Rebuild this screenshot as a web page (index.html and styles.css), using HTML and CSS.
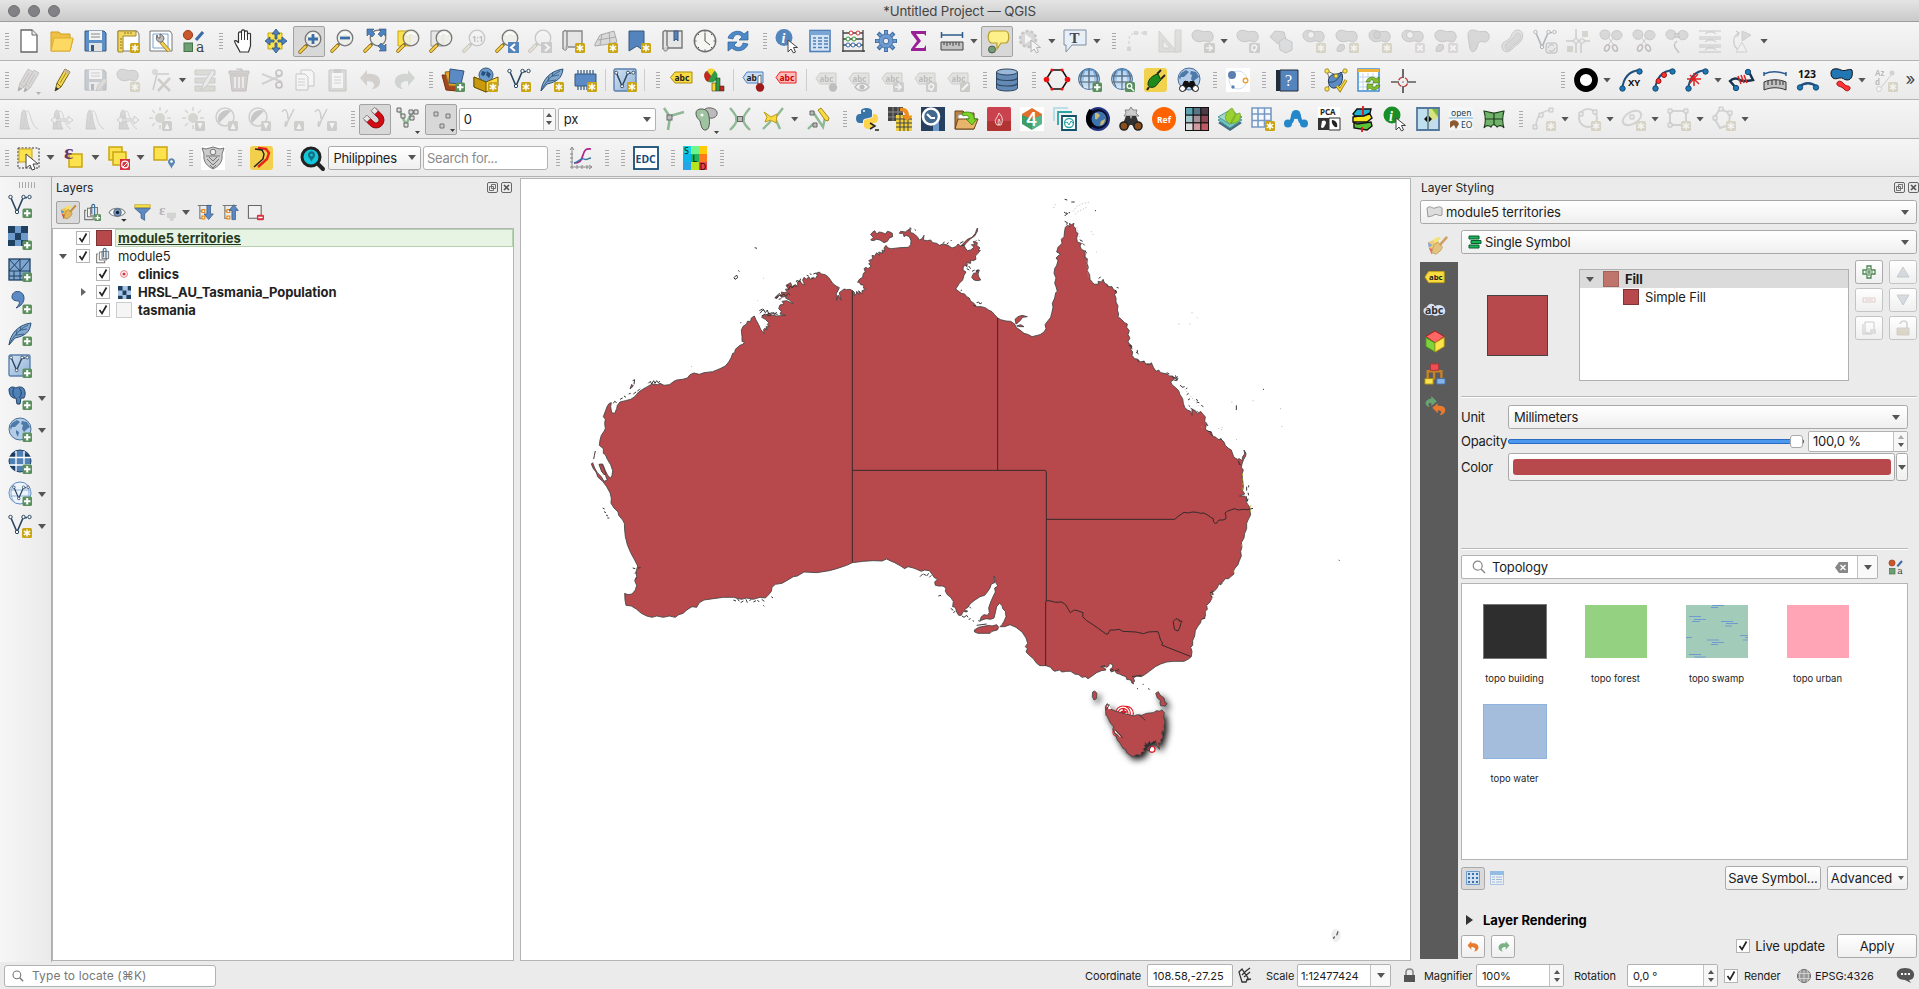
FILE: index.html
```html
<!DOCTYPE html>
<html lang="en">
<head>
<meta charset="utf-8">
<title>*Untitled Project — QGIS</title>
<link rel="stylesheet" href="styles.css">
</head>
<body>
<svg class="defs" width="0" height="0" aria-hidden="true">
<defs>
<linearGradient id="gBlue" x1="0" y1="0" x2="1" y2="1"><stop offset="0" stop-color="#d3e2f3"/><stop offset="1" stop-color="#8fb0d6"/></linearGradient>
<linearGradient id="gSky" x1="0" y1="0" x2="0" y2="1"><stop offset="0" stop-color="#5d9bd8"/><stop offset="1" stop-color="#dfeefa"/></linearGradient>
<!-- badges -->
<g id="bStar"><rect x="14" y="14" width="10" height="10" rx="1.5" fill="#c9a513"/><path d="M19 15.5v7M15.8 17.2l6.4 3.6M22.2 17.2l-6.4 3.6" stroke="#fff" stroke-width="1.5"/></g>
<g id="bPlus"><rect x="14.5" y="14.5" width="9.5" height="9.5" rx="1.5" fill="#5b8f5e"/><path d="M19.2 16v6.6M16 19.3h6.5" stroke="#fff" stroke-width="2"/></g>
<g id="bDel"><rect x="14" y="14" width="10" height="10" rx="1.5" fill="#d9a5a5"/><path d="M16.5 16.5l5 5m0-5l-5 5" stroke="#fff" stroke-width="2"/></g>
<g id="bGo"><rect x="13" y="14" width="11" height="10" rx="1.5" fill="#8e8e86"/><path d="M15 19h6m-3-3l3 3-3 3" stroke="#fff" stroke-width="1.6" fill="none"/></g>
<g id="bRot"><rect x="13" y="14" width="11" height="10" rx="1.5" fill="#8e8e86"/><path d="M16 17c3-2 6 0 4 3l-2 3M16 17v4h3" stroke="#fff" stroke-width="1.5" fill="none"/></g>
<g id="bUp"><rect x="13" y="14" width="10" height="10" rx="1.5" fill="#8d9584"/><path d="M18 16l2.5 6h-5z" fill="#fff"/></g>
<g id="bDn"><rect x="13" y="14" width="10" height="10" rx="1.5" fill="#8d9584"/><path d="M18 22l2.5-6h-5z" fill="#fff"/></g>
<g id="mini"><path d="M19 24h5l-2.500 3z" fill="#444"/></g>
<g id="mag"><path d="M9 15l-1.5 1.5" stroke="#222" stroke-width="2.5"/><path d="M7.5 16.5L2 22" stroke="#8a6a10" stroke-width="3.6" stroke-linecap="round"/><path d="M7.5 16.5L2 22" stroke="#f5cf4a" stroke-width="2" stroke-linecap="round"/><circle cx="15" cy="9" r="7.8" fill="#eeeee9" fill-opacity=".85" stroke="#777" stroke-width="1.3"/><path d="M11 6c2-3 6-3 8 0" stroke="#fff" stroke-width="1.5" fill="none"/></g>
<g id="vee"><path d="M3 4l6 14 6-14 4-.5" fill="none" stroke="#29455f" stroke-width="1.6"/><g fill="#fff" stroke="#29455f"><circle cx="2.5" cy="3" r="1.7"/><circle cx="15.5" cy="3" r="1.7"/><circle cx="21.5" cy="3" r="1.7"/><circle cx="9" cy="18" r="1.7"/></g></g>
<g id="feather"><path d="M1 23C2 13 9 3 23 1c-1 9-6 13-16 15z" fill="#82a8cf" stroke="#2f5379"/><path d="M1 23C6 13 12 7 20 3M8 14l1-6M12 9l1-5M9 13l7-1M13 8l6-1" fill="none" stroke="#2f5379" stroke-width=".8"/></g>
<g id="pencil"><path d="M2 23l2-8L12 1l5 3L8 19z" fill="#f2d84e" stroke="#77631e"/><path d="M12 1l5 3-1.600 2.500-5-3z" fill="#c9b7a0"/><path d="M2 23l1-4 3 2z" fill="#333"/><path d="M4 15l4 4" stroke="#77631e"/><path d="M7 15l6-10" stroke="#a08a20"/></g>
<g id="gpencil"><path d="M2 23l2-8L12 1l5 3L8 19z" fill="#b5a9a0" stroke="#776a66"/><path d="M2 23l1-4 3 2z" fill="#333"/><path d="M4 15l4 4M7 15l6-10" stroke="#776a66"/></g>
<g id="blob"><path d="M1 6c0-4 5-6 9-4 4 2 6-1 10 1 4 3 2 10-2 10-3 0-3-2-6-1-4 2-11 0-11-6z" fill="#a3aaa3" stroke="#6f756f"/></g>
<g id="tag"><path d="M6 5h16v11H6L2 10.500z" fill="#cbc9b8" stroke="#8d8b77"/><text x="5.500" y="14" class="tg">abc</text></g>
<g id="globe"><circle cx="11" cy="11" r="10.500" fill="url(#gSky)" stroke="#4c77a5"/><path d="M1 8h20M1 14h20M11 1v20M5 3c-3 5-3 11 0 16M17 3c3 5 3 11 0 16" fill="none" stroke="#5b6670" stroke-width="1.100"/><path d="M7 3h3v4H6zM12 3h3l1 4h-4zM6 9h4v4H6zM12 9h4v4h-4z" fill="#fff" fill-opacity=".5"/></g>
<g id="world"><circle cx="12" cy="11" r="11" fill="#b3cde8" stroke="#48709a"/><path d="M4 5l5-3 3 2-3 3-2 2-3 0-1 3-1-3zM14 3l5 1 3 5-3 2-3 3-2-3 1-4-2-1zM8 12l3 2-1 5-2-4z" fill="#4d7aa9"/></g>
<g id="hist"><path d="M3 22c1-8 1-19 4-19s2 14 6 19z" fill="#9daa9d" stroke="#888"/><path d="M6 22c2-10 2-20 5-18 3 3 3 15 10 18" fill="none" stroke="#aa8f8f"/></g>
<g id="sun"><circle cx="11" cy="11" r="5" fill="#a9a37c"/><path d="M11 0v4M11 18v4M0 11h4M18 11h4M3 3l3 3M16 6l3-3M3 19l3-3" stroke="#a9a37c" stroke-width="1.600"/></g>
<g id="contrast"><circle cx="10" cy="10" r="9" fill="#eee" stroke="#8b8b8b" stroke-width="1.500"/><path d="M4 16A9 9 0 0 1 16 4z" fill="#777"/></g>
<g id="undo"><path d="M8 2v4c9-1 14 3 13 9-1 4-5 6-8 6 4-3 3-8-5-8v5L1 10z"/></g>
<g id="brush"><path d="M2 8l10-4 4 9-10 8z" fill="#f4c04c"/><path d="M2 8l5 3-4 3z" fill="#5f93d4"/><path d="M3 14l7 2-4 5z" fill="#e1483f"/><path d="M8 4l7-2 1 3-7 4z" fill="#f6e15b"/><path d="M9 10l4-2 5 5-2 4-5 4-5-2z" fill="#e0b75b" stroke="#a97826" stroke-width=".8"/><path d="M15 11l8-9" stroke="#c58932" stroke-width="2.800"/></g>
<g id="i-style"><circle cx="6" cy="6" r="4.600" fill="#c9572c" stroke="#9b3d18"/><path d="M14 11l7-8" stroke="#3a6ea5" stroke-width="3.200"/><rect x="2" y="14" width="8.500" height="8.500" fill="#6d9f72" stroke="#437548"/><text x="14" y="22.500" class="sty">a</text></g>
<g id="sh1"><path d="M3 22C4 11 9 3 21 2" fill="none" stroke="#1f4f7c" stroke-width="2"/><g fill="#2077b4" stroke="#124a74"><circle cx="3.500" cy="20.500" r="2.700"/><circle cx="20.500" cy="3.500" r="2.700"/></g></g>
<g id="layerGrp"><path d="M3 9H1v13h12v-3" fill="none" stroke="#777" stroke-width="1.600"/><path d="M5 6h11v12H5z" fill="#fff" stroke="#777" stroke-width="1.500"/><path d="M9 5h10v11H9z" fill="#e8e8e8" stroke="#777" stroke-width="1.500"/><path d="M11 14V2c1-2 4-2 4 0v14" fill="none" stroke="#3f6f9f" stroke-width="1.600"/></g>
<g id="raster"><path d="M0 0h20v20H0z" fill="#6d9acb"/><path d="M0 0h7v7H0zM13 0h7v7h-7zM7 7h6v7H7zM0 14h7v6H0zM13 14h7v6h-7z" fill="#20405f"/></g>
<g id="tick"><rect x=".5" y=".5" width="13" height="13" fill="#fff" stroke="#b4b4b4"/><path d="M3.500 7l2.500 3.500 4.500-8" fill="none" stroke="#222" stroke-width="1.700"/></g>
<g id="cursor"><path d="M13 11v12l3-3 2.500 4 2-1-2-4.500h4z" fill="#fff" stroke="#444"/></g>
<g id="clover"><path d="M1 5c0-4 5-5 8-3 3 1 2 7-1 8-4 1-7-1-7-5zM14 3c3-3 9-1 9 3s-5 6-8 4-3-4-1-7z" fill="#a3aaa3" stroke="#777"/></g>
<g id="scis"><path d="M9 16l6-8M15 16L9 8" stroke="#888"/><ellipse cx="8" cy="19" rx="2.200" ry="3.300" transform="rotate(25 8 19)" fill="none" stroke="#8a5757" stroke-width="1.500"/><ellipse cx="16" cy="19" rx="2.200" ry="3.300" transform="rotate(-25 16 19)" fill="none" stroke="#8a5757" stroke-width="1.500"/></g>
<!-- project icons -->
<g id="i-new"><path d="M4 1h11l5 5v17H4z" fill="#fff" stroke="#666" stroke-width="1.300"/><path d="M15 1v5h5" fill="#eee" stroke="#666"/></g>
<g id="i-open"><path d="M1 3h8l2 2h9v4l3 1-3 12H1z" fill="#eec045" stroke="#d39f1e"/><path d="M4 9h19l-3 13H1z" fill="#fcd963" stroke="#dfae2e"/></g>
<g id="i-save"><path d="M2 2h19l2 2v18H2z" fill="#5d8fc9" stroke="#36597f"/><path d="M6 2h13v9H6z" fill="#f3f3f3"/><path d="M8 5h9M8 8h9" stroke="#888"/><path d="M6 14h13v8H6z" fill="#e2e2e2"/><path d="M8 16h3v6H8z" fill="#36597f"/></g>
<g id="i-layout"><path d="M2 2h19l2 3v17H2z" fill="#fff" stroke="#777"/><path d="M2 2h18v5H7v16H2z" fill="#f3d660" stroke="#a08a30"/><path d="M4 10h2M4 13h2M4 16h2M4 19h2M9 3v2M12 3v2M15 3v2" stroke="#8d7420"/><use href="#bStar"/></g>
<g id="i-mgr"><path d="M1 2h20l2 3v17H1z" fill="#fff" stroke="#777"/><path d="M4 5h15v14H4z" fill="none" stroke="#79a1ce"/><path d="M12 13l8 9" stroke="#9e8120" stroke-width="4"/><path d="M12 13l8 9" stroke="#f1d253" stroke-width="2.500"/><path d="M8 6c-2 5 1 8 5 7l2-3c0-3-2-4-4-5v4H9z" fill="#bbb" stroke="#666"/></g>
<g id="i-hand"><path d="M9 23C7 18 4 15 3.500 12c1-1 3 0 4 2V4c1-2 3-1 3 0V2c1-2 3-1 3 0v1c1-2 3-1 3 0v2c1-1 3-1 3 0v12l-2 6z" fill="#fff" stroke="#333" stroke-width="1.200"/><path d="M10.500 4v7M13.500 3v8M16.500 5v6" stroke="#333"/></g>
<g id="i-pan"><path d="M4 4h14v16H4z" fill="#fce24d" stroke="#c9a513"/><path d="M12 0l4 5h-3v5h-2V5H8zM12 24l4-5h-3v-5h-2v5H8zM1 12l5-4v3h4v2H6v3zM23 12l-5-4v3h-4v2h4v3z" fill="#4d82bf" stroke="#2c527c" stroke-width=".8"/></g>
<g id="i-zin"><use href="#mag"/><path d="M15 4v10M10 9h10" stroke="#3c6ea8" stroke-width="2.800"/></g>
<g id="i-zout"><use href="#mag"/><path d="M10 9h10" stroke="#3c6ea8" stroke-width="2.800"/></g>
<g id="i-zfull"><use href="#mag"/><g fill="#4d82bf" stroke="#2c527c" stroke-width=".6"><path d="M4 0h7L9 2l3 3-3 3-3-3-2 2zM23 0v7l-2-2-3 3-3-3 3-3-2-2zM23 22h-7l2-2-3-3 3-3 3 3 2-2z"/></g></g>
<g id="i-zsel"><path d="M2 2h12v15H2z" fill="#fce24d" stroke="#c9a513"/><use href="#mag"/></g>
<g id="i-zlay"><path d="M2 2h12v15H2z" fill="#e6e6e6" stroke="#999"/><use href="#mag"/></g>
<g id="i-znat"><use href="#mag"/><text x="10" y="12.500" class="tg">1:1</text></g>
<g id="i-zlast"><use href="#mag"/><path d="M13 13h11v11H13z" fill="#5484bd"/><path d="M20 15l-4 3.500 4 3.500" fill="none" stroke="#fff" stroke-width="2"/></g>
<g id="i-znext"><use href="#mag"/><path d="M13 13h11v11H13z" fill="#888"/><path d="M17 15l4 3.500-4 3.500" fill="none" stroke="#fff" stroke-width="2"/></g>
<g id="i-nmap"><path d="M2 20V3c2-2 3-2 4 0v14M6 2h15v16H7" fill="#e5e5e5" stroke="#888" stroke-width="1.400"/><path d="M2 19c0 3 4 3 4 0v-3" fill="#ccc" stroke="#888"/><use href="#bStar"/></g>
<g id="i-n3d"><path d="M1 15l5-9 14-4 3 11-8 2-14 2z" fill="#d9d9d9" stroke="#aaa"/><path d="M4 11l18-3M8 5l-2 11M15 3l1 11" stroke="#aaa"/><use href="#bStar"/></g>
<g id="i-nbm"><path d="M2 2h15v20l-7-5-8 5z" fill="#5484bd" stroke="#36597f"/><use href="#bStar"/></g>
<g id="i-bm"><path d="M3 20V3c2-2 3-2 4 0v14M7 2h15v17H7" fill="#e5e5e5" stroke="#777" stroke-width="1.400"/><path d="M14 2h4v10l-2-2-2 2z" fill="#5484bd" stroke="#36597f"/><path d="M3 19c0 4 5 4 5 0v-2" fill="#ccc" stroke="#777"/></g>
<g id="i-clock"><circle cx="12" cy="12" r="10.700" fill="#f6f6f3" stroke="#707070" stroke-width="1.400"/><path d="M12 4v8l5 4M12 2v1.500M12 20.500V22M2 12h1.500M20.500 12H22M5 5l1 1M18 18l1 1M5 19l1-1M18 6l1-1" fill="none" stroke="#555"/></g>
<g id="i-refresh"><path d="M2 9C4 2 14 0 18 5l4-3v9h-9l3-3c-3-4-8-3-9 2z" fill="#4d8ac9" stroke="#2a5c92" stroke-width=".7"/><path d="M22 15c-2 7-12 9-16 4l-4 3v-9h9l-3 3c3 4 8 3 9-2z" fill="#4d8ac9" stroke="#2a5c92" stroke-width=".7"/></g>
<g id="i-ident"><circle cx="9" cy="8.500" r="8.500" fill="#5585bd"/><text x="6.500" y="14" class="ital">i</text><use href="#cursor"/></g>
<g id="i-table"><rect x="2" y="1.500" width="20" height="21" fill="#d5e4f5" stroke="#4f80b6" stroke-width="1.600"/><path d="M2 2h20v4H2z" fill="#7ba5d4"/><path d="M5 9h3M10 9h4M16 9h4M5 12h3M10 12h4M16 12h4M5 15h3M10 15h4M16 15h4M5 18.500h3M10 18.500h4M16 18.500h4" stroke="#4f80b6" stroke-width="1.600"/></g>
<g id="i-abacus"><path d="M2 1v22M22 1v22M1 22h23M2 4h20M2 10h20M2 16h20" stroke="#444" stroke-width="1.300"/><g fill="#fff" stroke="#c33"><circle cx="10" cy="4" r="2"/><circle cx="17" cy="4" r="2"/></g><g fill="#fff" stroke="#393"><circle cx="7" cy="10" r="2"/><circle cx="13" cy="10" r="2"/></g><g fill="#fff" stroke="#36a"><circle cx="7" cy="16" r="2"/><circle cx="12" cy="16" r="2"/><circle cx="18" cy="16" r="2"/></g></g>
<g id="i-gear"><path d="M12 1v22M1 12h22M4 4l16 16M20 4L4 20" stroke="#3f6fa5" stroke-width="4"/><path d="M12 2v20M2 12h20M5 5l14 14M19 5L5 19" stroke="#6f9bd0" stroke-width="2.400"/><circle cx="12" cy="12" r="7" fill="#6f9bd0" stroke="#4878ad"/><circle cx="12" cy="12" r="2.800" fill="#eee" stroke="#3f6fa5"/></g>
<g id="i-sigma"><path d="M4 2h15v5l-2-2H9l5 7-6 7h9l2-3v6H4v-2l6-8-6-8z" fill="#9a2096"/></g>
<g id="i-ruler"><path d="M1 6h22M1.500 3v6M22.500 3v6" stroke="#2d5b8e" stroke-width="1.500"/><path d="M1 13h22v8H1z" fill="#c2c2c2" stroke="#444"/><path d="M4 13v3M7 13v4M10 13v3M13 13v4M16 13v3M19 13v4" stroke="#444"/></g>
<g id="i-tips"><path d="M6 1h13c5 0 5 12 0 12h-4l-4 6v-6H6C1 13 1 1 6 1z" fill="#fdf08a" stroke="#b9a02c" stroke-width="1.200"/><circle cx="6" cy="19.500" r="3.500" fill="#6d9f72" stroke="#555"/></g>
<g id="i-action"><circle cx="10" cy="10" r="8" fill="#aaa" stroke="#777" stroke-width="2.500" stroke-dasharray="3 2"/><path d="M7 5l7 5-7 5z" fill="#fff"/><use href="#cursor"/></g>
<g id="i-text"><path d="M1 1h22v15H9l-6 7v-7H1z" fill="#e9eff6" stroke="#7d8da0"/><text x="6.500" y="13.500" class="serifT">T</text></g>
<!-- advanced digitizing -->
<g id="i-cad"><path d="M4 20V11c0-5 3-7 8-7h8" fill="none" stroke="#888" stroke-dasharray="3 2"/><path d="M2 18h4v4H2zM9 2h4v4H9zM18 2h4v4h-4z" fill="#aaa"/></g>
<g id="i-tri"><path d="M1 23V2l18 21zM5 19v-8l7 8z" fill="#c4bcae" stroke="#998" fill-rule="evenodd"/><path d="M17 1h6v22h-6z" fill="#c4bcae" stroke="#998"/></g>
<g id="i-mv"><use href="#blob"/><use href="#bGo"/></g>
<g id="i-rot"><use href="#blob"/><use href="#bRot"/></g>
<g id="i-simp"><path d="M1 8l5-6 9 1 2 8-8 4z" fill="#a3aaa3" stroke="#777"/><path d="M10 13l5-4 8 4v8l-6 3-6-3z" fill="#b5bcc4" stroke="#777"/></g>
<g id="i-ring"><use href="#blob"/><circle cx="9" cy="6" r="3.500" fill="#eee" stroke="#777"/><use href="#bStar"/></g>
<g id="i-part"><use href="#blob"/><path d="M2 22c0-5 3-8 7-6 2 4-2 8-7 6z" fill="#a3aaa3" stroke="#777"/><use href="#bStar"/></g>
<g id="i-fring"><use href="#blob"/><circle cx="9" cy="6" r="3.500" fill="#999" stroke="#777"/><use href="#bStar"/></g>
<g id="i-dring"><use href="#blob"/><circle cx="9" cy="6" r="3.500" fill="#eee" stroke="#777"/><use href="#bDel"/></g>
<g id="i-dpart"><use href="#blob"/><path d="M2 22c0-5 3-8 7-6 2 4-2 8-7 6z" fill="#a3aaa3" stroke="#777"/><use href="#bDel"/></g>
<g id="i-reshape"><path d="M1 5c0-4 5-5 9-3s6-1 10 1c4 3 2 10-2 10-3 0-5-2-7 2-2 9-7 10-8 4s-2-9-2-14z" fill="#a3aaa3" stroke="#777"/></g>
<g id="i-offset"><path d="M2 18c-1-5 4-5 7-8s3-9 9-9c7 1 5 9 2 12s-4 3-8 7-9 4-10-2z" fill="#c9c5b0" stroke="#777"/><path d="M5 17c1-4 4-4 7-7s3-6 6-6c4 1 3 6 0 9s-4 2-7 6-6 2-6-2z" fill="#a3aaa3" stroke="#888"/></g>
<g id="i-revl"><use href="#vee"/><rect x="13" y="14" width="11" height="10" rx="2" fill="#ddd" stroke="#555"/><path d="M15 19c1-4 5-4 6-2M22 19c-1 4-5 4-6 2" fill="none" stroke="#555"/></g>
<g id="i-trim"><path d="M0 12h24M10 0v24M15 12v12" stroke="#888" stroke-width="1.500"/><path d="M8 10h4v4H8zM14 10h4v4h-4z" fill="#eee" stroke="#888"/><path d="M16 2h6v6h-6zM1 17h6v6H1z" fill="#aaa06f"/></g>
<g id="i-splitf"><use href="#clover"/><use href="#scis"/></g>
<g id="i-merge"><use href="#clover"/><path d="M9 5h6M9 8h6M12 12c-6 5 0 8 2 12" fill="none" stroke="#777" stroke-width="1.500"/></g>
<g id="i-mergea"><path d="M1 2h22M1 8h22M1 10h22M1 16h22M1 18h22M1 23h22M7 5l3-2h5l3 2M7 13l3-2h5l3 2M7 21l3-2h5l3 2" fill="none" stroke="#777"/></g>
<g id="i-rotsym"><path d="M8 21C1 17 1 7 8 4L5 2M8 4l-2 4" fill="none" stroke="#888" stroke-width="1.300"/><path d="M11 2l9 4-9 6z" fill="#aaa" stroke="#888"/><path d="M5 23h11l-5-10z" fill="#f3f3f3" stroke="#999"/></g>
<!-- editing -->
<g id="i-pens"><g transform="translate(-1)"><use href="#gpencil"/></g><g transform="translate(5 1)"><use href="#gpencil"/></g><use href="#mini"/></g>
<g id="i-pencil"><g transform="translate(3)"><use href="#pencil"/></g></g>
<g id="i-sedit"><use href="#i-save"/><path d="M13 23l2-6 6-7 3 3-6 8z" fill="#c4b48f" stroke="#887"/></g>
<g id="i-addpoly"><use href="#blob"/><use href="#bStar"/></g>
<g id="i-vtool"><path d="M4 22L8 6M8 6h12M8 6L4 2" stroke="#888" stroke-width="1.500"/><circle cx="6" cy="4" r="3" fill="#aaa"/><path d="M9 11l12 12M21 10L9 23" stroke="#998e77" stroke-width="2.600"/></g>
<g id="i-attr"><path d="M1 2h20v5H1zM1 10h20v5H1zM1 18h20v5H1z" fill="#b9b586" stroke="#888"/><path d="M7 22l3-8L18 2l3 2-8 14z" fill="#ddd" stroke="#888"/></g>
<g id="i-trash"><path d="M3 7h18l-2 16H5zM2 3h20v3H2zM9 1h6v2" fill="#bd8c8c" stroke="#8e6262"/><path d="M8 9v11M12 9v11M16 9v11" stroke="#fff" stroke-width="1.500"/></g>
<g id="i-cut"><path d="M2 6l20 8M2 16L22 7" stroke="#999" stroke-width="2"/><circle cx="19" cy="5" r="3" fill="none" stroke="#8e6262" stroke-width="1.700"/><circle cx="19" cy="17" r="3" fill="none" stroke="#8e6262" stroke-width="1.700"/></g>
<g id="i-copy"><path d="M8 2h10l3 3v13H8z" fill="#fff" stroke="#777"/><path d="M3 6h9l3 3v13H3z" fill="#fff" stroke="#777"/><path d="M5 11h7M5 14h7M5 17h7" stroke="#999"/></g>
<g id="i-paste"><path d="M3 2h17v21H3z" fill="#b8b295" stroke="#777"/><path d="M6 5h11v15H6z" fill="#fff"/><path d="M8 1h7v4H8z" fill="#888"/><path d="M8 9h7M8 12h7M8 15h7" stroke="#999"/></g>
<g id="i-undo"><use href="#undo" fill="#b58e75"/></g>
<g id="i-redo"><use href="#undo" fill="#87a787" transform="matrix(-1 0 0 1 24 0)"/></g>
<!-- data sources -->
<g id="i-dsm"><path d="M1 7l12 0 3 16-11-1z" fill="#a3461f" stroke="#74300f"/><path d="M4 4l12-1 4 15H8z" fill="#e9a22a" stroke="#8f6417"/><path d="M9 1l14 2-3 13-12-1z" fill="#5b8ac4" stroke="#31557f"/><use href="#bPlus"/></g>
<g id="i-gpkg"><circle cx="12" cy="7" r="7" fill="#6d9acb" stroke="#36597f"/><path d="M8 3l4 1-2 4-3-1zM13 3l4 3-2 4-3-3z" fill="#254f7c"/><path d="M0 9l12 5 12-5v9l-12 6L0 19z" fill="#fbdc45" stroke="#6d5605"/><path d="M0 9l12 5v10L0 19z" fill="#c99a0c" stroke="#6d5605"/><use href="#bStar"/></g>
<g id="i-vnew"><use href="#vee"/><use href="#bStar"/></g>
<g id="i-fnew"><use href="#feather"/><use href="#bStar"/></g>
<g id="i-mem"><path d="M5 2v20M8 2v20M11 2v20M14 2v20M17 2v20M20 2v20" stroke="#36597f" stroke-width="1.200"/><path d="M2 6h21v12H2z" fill="#5b8ac4" stroke="#36597f"/><use href="#bStar"/></g>
<g id="i-virt"><rect x="1" y="1" width="22" height="22" rx="1.500" fill="url(#gBlue)" stroke="#5a80ab" stroke-width="1.400"/><g transform="translate(1 2) scale(.9)"><use href="#vee"/></g><use href="#bStar"/></g>
<!-- labels -->
<g id="i-lab"><path d="M6 4h17v11H6L1.500 9.500z" fill="#f8dc3f" stroke="#a98b12"/><text x="5.500" y="13" class="tgb">abc</text></g>
<g id="i-diag"><circle cx="9" cy="8" r="6.500" fill="#2f9d45"/><path d="M9 8L5 2a7 7 0 0 1 8 0z" fill="#f9d22d"/><path d="M9 8L4 3a7 7 0 0 0 2 11z" fill="#c8261d"/><path d="M10 15h4v8h-4z" fill="#f9d22d" stroke="#222" stroke-width=".5"/><path d="M14 10h4v13h-4z" fill="#2f9d45" stroke="#222" stroke-width=".5"/><path d="M18 18h4v5h-4z" fill="#c8261d" stroke="#222" stroke-width=".5"/></g>
<g id="i-lpin"><path d="M6 4h16v11H6L2 9.500z" fill="#c9dcf4" stroke="#4f80c0"/><text x="5.500" y="13" class="tgb">ab</text><path d="M17 8l3-1v9h-3z" fill="#fff" stroke="#333" stroke-width=".7"/><circle cx="19" cy="19.500" r="4.200" fill="#9d1b1b"/></g>
<g id="i-lunp"><path d="M6 4h16v11H6L2 9.500z" fill="#fbb" stroke="#e22"/><text x="5.500" y="13" class="tgr">abc</text></g>
<g id="i-l1"><use href="#tag"/><circle cx="19" cy="19.500" r="4.200" fill="#7d5b5b"/></g>
<g id="i-l2"><use href="#tag"/><path d="M8 19c4-5 10-5 14 0-4 5-10 5-14 0z" fill="#fff" stroke="#666" stroke-width="1.400"/><circle cx="15" cy="19" r="2.600" fill="#666"/></g>
<g id="i-l3"><use href="#tag"/><use href="#bGo"/></g>
<g id="i-l4"><use href="#tag"/><use href="#bRot"/></g>
<g id="i-l5"><use href="#tag"/><rect x="14" y="14" width="10" height="10" rx="1.500" fill="#8e8a66"/><path d="M16 22l6-6" stroke="#fff" stroke-width="2.200"/></g>
<g id="i-db"><path d="M1.500 4v16c0 4 21 4 21 0V4" fill="#6389b5" stroke="#30475f"/><ellipse cx="12" cy="4" rx="10.500" ry="3" fill="#9bb8d9" stroke="#30475f"/><path d="M1.500 9.500c0 4 21 4 21 0M1.500 15c0 4 21 4 21 0" fill="none" stroke="#30475f" stroke-width="1.200"/></g>
<!-- web plugins -->
<g id="i-hex"><path d="M7 2h10l6 9.500L17 21H7L1 11.500z" fill="none" stroke="#111" stroke-width="1.500"/><g fill="#ee1111"><circle cx="7" cy="2" r="1.600"/><circle cx="17" cy="2" r="1.600"/><circle cx="7" cy="21" r="1.600"/><circle cx="17" cy="21" r="1.600"/><circle cx="1.500" cy="11.500" r="2.800"/><circle cx="22.500" cy="11.500" r="2.800"/></g></g>
<g id="i-wadd"><use href="#globe"/><use href="#bPlus"/></g>
<g id="i-wsea"><use href="#globe"/><rect x="14" y="14" width="10" height="10" rx="1.500" fill="#5b8f5e"/><circle cx="18.500" cy="18" r="2.300" fill="none" stroke="#fff" stroke-width="1.300"/><path d="M20 20l3 3" stroke="#fff" stroke-width="1.500"/></g>
<g id="i-plug"><rect width="23" height="24" rx="3" fill="#f1d24f"/><path d="M4 16c0-5 5-9 10-10l3 6c-3 2-4 6-7 7s-6 0-6-3z" fill="#1f8a1c" stroke="#0e3c0c"/><path d="M13 6l4-4M17 11l4-4" stroke="#222" stroke-width="1.800"/><path d="M5 19l-2 3" stroke="#222" stroke-width="2"/></g>
<g id="i-wbin"><use href="#world"/><path d="M3 22l4-9h4l1 2 1-2h4l4 9-5 1-3-4h-2l-3 4z" fill="#111"/><g fill="#fff" stroke="#111"><circle cx="5.500" cy="20.500" r="3"/><circle cx="18.500" cy="20.500" r="3"/></g></g>
<g id="i-orbit"><path d="M0 0h24v24H0z" fill="#fff"/><circle cx="12" cy="12" r="9" fill="none" stroke="#cfe0ee"/><circle cx="6" cy="7" r="4" fill="#5c7fb0"/><circle cx="19.500" cy="12.500" r="2.300" fill="#fff" stroke="#eea032" stroke-width="1.400"/><circle cx="7" cy="19" r="1.700" fill="#5c7fb0"/></g>
<g id="i-help"><path d="M1 2h4v21H1z" fill="#222d3a"/><path d="M5 2h18v21H5z" fill="#5484bd" stroke="#222d3a"/><text x="10" y="18" class="qm">?</text></g>
<g id="i-topo"><path d="M3 3l9 4 9-4M3 3l2 7M3 21l3-5" stroke="#777" fill="none"/><path d="M5 10c3-6 9-2 12-6 3 4 2 14-6 16-5 1-8-5-6-10z" fill="#5b8ac4" stroke="#223a57"/><path d="M5 14c5 1 9-2 12-8" fill="none" stroke="#223a57" stroke-width=".8"/><g fill="#fbe34c" stroke="#7b6b10" stroke-width=".7"><circle cx="3" cy="3" r="2.200"/><circle cx="21" cy="3" r="2.200"/><circle cx="3" cy="21" r="2.200"/><circle cx="12" cy="8" r="2"/></g><path d="M13 18l3 4 6-10" fill="none" stroke="#8a7410" stroke-width="3"/><path d="M13 18l3 4 6-10" fill="none" stroke="#f9d22d" stroke-width="1.600"/></g>
<g id="i-reload"><path d="M1 1h21v22H1z" fill="#fff" stroke="#3d8fd1" stroke-width="1.500"/><path d="M1 1h21v3H1z" fill="#f0b33c"/><path d="M6 5v17M11 5v17M16 5v17M2 9h19M2 14h19M2 19h19" stroke="#bcd7ee"/><path d="M9 14c2-6 8-6 10-3l3-2v6h-6l1-2c-2-2-4-1-4 1z" fill="#82bf2f" stroke="#3e6d10" stroke-width=".6"/><path d="M23 17c-2 6-8 6-10 3l-3 2v-6h6l-1 2c2 2 4 1 4-1z" fill="#82bf2f" stroke="#3e6d10" stroke-width=".6"/></g>
<g id="i-cross"><path d="M13 1v9M13 18v7M1 14h8M17 14h9M12.500 14h1" stroke="#111" stroke-width="1.200"/><circle cx="13" cy="14" r="4.700" fill="none" stroke="#b33" stroke-width="1.300" stroke-dasharray="4.500 2.880" stroke-dashoffset="-1.500"/></g>
<g id="i-ringk"><circle cx="12" cy="12" r="9" fill="#fff" stroke="#000" stroke-width="5.800"/></g>
<g id="i-xy"><use href="#sh1"/><text x="9" y="18" class="xy">XY</text></g>
<g id="i-pts"><use href="#sh1"/><g fill="#f33" stroke="#911"><circle cx="6.500" cy="13" r="2.500"/><circle cx="12" cy="7" r="2.500"/></g></g>
<g id="i-xcut"><use href="#sh1"/><path d="M9 5v13M2 11h14M5 7l9 9M13 6l-8 9" stroke="#d22" stroke-width="1.500"/></g>
<g id="i-brk"><path d="M6 20l-6-7c3-3 7-3 10-1s8 1 13 0l-4-8" fill="none" stroke="#16324d" stroke-width="2.400"/><path d="M8 8l3 8M11 7l3 8M14 7l3 8" stroke="#d22" stroke-width="1.500"/><g fill="#2077b4" stroke="#124a74"><circle cx="6" cy="20" r="2.700"/><circle cx="18" cy="4" r="2.700"/></g></g>
<g id="i-rul2"><path d="M1 6c7-3 14-3 22 0M1 4v4M23 4v4" fill="none" stroke="#2d5b8e" stroke-width="1.500"/><path d="M1 14c7-3 15-3 22 0v8c-7-3-15-3-22 0z" fill="#c2c2c2" stroke="#333"/><path d="M5 13v4M9 12v5M13 12v5M17 13v4M20 13v4" stroke="#333"/></g>
<g id="i-123"><text x="2" y="10" class="n123">123</text><path d="M3 19c6-5 12-5 18 0" fill="none" stroke="#1f4f7c" stroke-width="2.400"/><g fill="#2077b4" stroke="#124a74"><circle cx="4" cy="19.500" r="2.700"/><circle cx="20" cy="19.500" r="2.700"/></g></g>
<g id="i-bred"><path d="M2 5c0-5 6-5 10-3s8-2 11 0c1 5 0 10-5 10-3 0-4-3-8-2-5 2-8 0-8-5z" fill="#2077b4" stroke="#111"/><path d="M8 15c1-3 5-2 7 1s6 1 6 4-4 4-6 1-8-2-7-6z" fill="#f33" stroke="#911"/></g>
<g id="i-azd"><text x="1" y="8" class="tg">Az</text><text x="1" y="17" class="tg">d</text><path d="M5 22L18 6" stroke="#888"/><circle cx="18" cy="5" r="2.500" fill="#999"/><circle cx="5" cy="21" r="2.500" fill="#fff" stroke="#999"/><use href="#bStar"/></g>
<!-- raster and snapping -->
<g id="i-h1"><use href="#hist"/></g>
<g id="i-h2"><use href="#hist"/><path d="M1 13l5-4v3h12V9l5 4-5 4v-3H6v3z" fill="#eee" stroke="#888"/></g>
<g id="i-s1"><use href="#sun"/><use href="#bUp"/></g><g id="i-s2"><use href="#sun"/><use href="#bDn"/></g>
<g id="i-c1"><use href="#contrast"/><use href="#bUp"/></g><g id="i-c2"><use href="#contrast"/><use href="#bDn"/></g>
<g id="gam"><path d="M1 5c3-5 6-1 6 7M13 2L7 14c-2 7-4 7-2 0" fill="none" stroke="#888" stroke-width="1.500"/></g>
<g id="i-g1"><use href="#gam"/><use href="#bUp"/></g><g id="i-g2"><use href="#gam"/><use href="#bDn"/></g>
<g id="i-magnet"><g transform="rotate(-45 12 12)"><path d="M4 4v8a8 8 0 0 0 16 0V4h-5v8a3 3 0 0 1-6 0V4z" fill="#d40b12" stroke="#7d0508" stroke-width=".8"/><path d="M4 2h5v5H4zM15 2h5v5h-5z" fill="#e8e8e8" stroke="#777" stroke-width=".8"/></g></g>
<g id="i-snapv"><path d="M4 4l6 14L15 7l7-3" fill="none" stroke="#8fb894" stroke-width="2.600"/><g fill="#ddd" stroke="#666"><path d="M1 1h4v4H1zM13 3h4v4h-4zM18 3h4v4h-4zM8 16h4v4H8zM5 7h4v4H5zM14 9h4v4h-4z"/></g><use href="#mini"/></g>
<g id="i-snapp"><g fill="#ccc" stroke="#777"><path d="M4 4h4v4H4zM16 6h4v4h-4zM10 16h4v4h-4z"/></g><path d="M20 21h5l-2.500 3z" fill="#444"/></g>
<g id="i-t1"><path d="M2 1l6 9-2 13M8 9l14-4" fill="none" stroke="#8fb894" stroke-width="2.600"/><rect x="5" y="8" width="5" height="5" fill="#bbb" stroke="#666"/></g>
<g id="i-t2"><path d="M9 3c3-4 12-2 13 2s-3 7-8 6z" fill="#bbb" stroke="#666"/><path d="M1 6c0-5 8-5 11-2 3 4 4 18-1 19s-5-7-6-9-4-3-4-8z" fill="#9dc3a1" stroke="#555"/><circle cx="7" cy="8" r="1.500" fill="#fff"/><use href="#mini"/></g>
<g id="i-t3"><path d="M2 1c9 10 9 13 0 22M22 1c-9 10-9 13 0 22M7 12h10" fill="none" stroke="#8fb894" stroke-width="2.400"/><rect x="9.500" y="9.500" width="5" height="5" fill="#bbb" stroke="#666"/></g>
<g id="i-t4"><path d="M22 1l-8 10M2 22l8-8M14 11l5 11" fill="none" stroke="#8fb894" stroke-width="2.400"/><path d="M3 5l7 5 6-3-1 9-5-3-6 2 2-5z" fill="#f8dc3f" stroke="#c09a15"/></g>
<g id="i-t5"><path d="M2 22l5-5M7 5l10 15 2-9" fill="none" stroke="#8fb894" stroke-width="2.400"/><g fill="#bbb" stroke="#666"><path d="M4 4h4v4H4zM7 16h4v4H7z"/></g><path d="M12 3l3-2 8 10-1 3-3-1z" fill="#f8dc3f" stroke="#a08a20"/></g>
<!-- plugins row -->
<g id="i-py"><path d="M6 7V4c0-4 11-4 11 0v5c0 3-9 1-9 5v2H4c-4 0-4-9 0-9h8" fill="#3775a9"/><path d="M9 16v-2c0-3 9-1 9-5V7h2c4 0 4 9 0 9h-7M9 16v3c0 4 9 4 9 0v-3z" fill="#fcd34a"/><circle cx="9" cy="4" r="1" fill="#fff"/><path d="M15 16l5 3-5 3M20 23h4" fill="none" stroke="#222" stroke-width="1.500"/></g>
<g id="i-rast"><path d="M0 0h15v14H0z" fill="#444"/><path d="M0 5h15M0 10h15M5 0v14M10 0v14" stroke="#8c8c8c"/><path d="M8 8h16v16H8z" fill="#ecd03f"/><path d="M8 12h16M8 16h16M8 20h16M12 8v16M16 8v16M20 8v16" stroke="#444"/><path d="M12 1c7-1 9 3 9 8h3l-5 5-5-5h3c0-4-2-5-5-5z" fill="#ef8c1d"/></g>
<g id="i-clk2"><path d="M0 0h24v24H0z" fill="#274060"/><path d="M12 12h6v12h-6z" fill="#6d9acb"/><circle cx="10" cy="9.500" r="8" fill="#41688f" stroke="#fff" stroke-width="2.600"/><path d="M6 7l4 4h4" fill="none" stroke="#fff" stroke-width="2.200"/></g>
<g id="i-fold"><path d="M1 4h8l2 2h9v16H1z" fill="#b98043" stroke="#6d451a"/><path d="M4 8l14-2v12H4z" fill="#fff" stroke="#999"/><path d="M4 12h20l-4 10H1z" fill="#e8b36a" stroke="#6d451a"/><path d="M8 6c8-3 13 1 12 6h3l-5 6-6-6h3c0-4-3-4-6-3z" fill="#7bd425" stroke="#2f7a0a" stroke-width=".7"/></g>
<g id="i-fire"><rect width="24" height="24" rx="1.500" fill="#c9424d"/><path d="M0 14h24v10H0z" fill="#a42b22" fill-opacity=".6"/><path d="M12 6c4 4 4 8 2 12h-4c-4-5 0-6 2-12zM12 12c1.500 3 1.500 4 0 6-1.500-2-1-4 0-6z" fill="none" stroke="#f6dada" stroke-width="1"/></g>
<g id="i-four"><path d="M0 0h24v24H0z" fill="#fff"/><path d="M12 1l10 6v5H2V7z" fill="#e2702c"/><path d="M2 8l10 4v11L2 17z" fill="#3f9c63"/><path d="M22 8v9l-10 6V12z" fill="#57b58b"/><text x="6.500" y="18.500" class="four">4</text></g>
<g id="i-frames"><path d="M1 14V1h14" fill="none" stroke="#a9dbe5" stroke-width="1.600"/><path d="M5 18V5h14" fill="none" stroke="#2aa6a6" stroke-width="1.800"/><path d="M9 9h14v14H9z" fill="#fff" stroke="#14526b" stroke-width="1.800"/><circle cx="16" cy="16" r="4.500" fill="none" stroke="#2aa6a6" stroke-width="1.300"/><path d="M12 16l2-1 2 3 2-4 2 2" fill="none" stroke="#2aa6a6"/></g>
<g id="i-earth"><circle cx="12" cy="12" r="11" fill="#0a0d2a" stroke="#223682" stroke-width="2"/><circle cx="13" cy="12" r="7.500" fill="#3d73ad"/><path d="M9 6c4 0 6 2 4 4s-2 3-4 2zM15 14l4-2c0 4-3 7-5 6z" fill="#c8b97a"/><path d="M5 3c-4 6-4 12 1 17" stroke="#000" stroke-width="4" fill="none"/></g>
<g id="i-binoc"><path d="M12 0l2 3h4l-1 3 3 3H5l2-3-1-3h4z" fill="#c9ccca" stroke="#888"/><path d="M3 19l4-10h4l1 3 1-3h4l4 10-4 4-4-5h-2l-4 5z" fill="#333"/><g fill="#8a4d1c" stroke="#222" stroke-width="1.600"><circle cx="5" cy="19" r="4"/><circle cx="19" cy="19" r="4"/></g></g>
<g id="i-ref"><circle cx="12" cy="12" r="12" fill="#fe6300"/><text x="5" y="16" class="ref">Ref</text></g>
<g id="i-biv"><path d="M0 0h24v24H0z" fill="#111"/><path d="M1 1h6.500v6.500H1z" fill="#5ba3b0"/><path d="M8.700 1h6.500v6.500H8.700z" fill="#587587"/><path d="M16.400 1H23v6.500h-6.600z" fill="#4b3b46"/><path d="M1 8.700h6.500v6.500H1z" fill="#a1c6cd"/><path d="M8.700 8.700h6.500v6.500H8.700z" fill="#a39098"/><path d="M16.400 8.700H23v6.500h-6.600z" fill="#8c4752"/><path d="M1 16.400h6.500V23H1z" fill="#dcdcdc"/><path d="M8.700 16.400h6.500V23H8.700z" fill="#cf9ba0"/><path d="M16.400 16.400H23V23h-6.600z" fill="#c15a60"/></g>
<g id="i-leaf"><path d="M0 16l12-7 12 7-12 8z" fill="#476b7c"/><path d="M0 13l12-7 12 7-12 8z" fill="#75c2bf" stroke="#4a98a0"/><path d="M0 10L12 3l12 7-12 7z" fill="#a4d8c9" stroke="#4a98a0"/><path d="M12 17C3 11 9 4 14 1c4 5 5 10-2 16zM13 16c2-7 5-9 9-10 2 7-3 11-9 10z" fill="#9ad02f" stroke="#6ca11c" stroke-width=".7"/></g>
<g id="i-grid"><path d="M1 1h19v19H1zM7 1v19M13.500 1v19M1 7h19M1 13.500h19" fill="#f5f9fd" stroke="#7799c4" stroke-width="1.600"/><use href="#bStar"/></g>
<g id="i-tri3"><path d="M4 16c4 0 4-3 5-7h6c1 4 1 7 5 7" fill="none" stroke="#2387c9" stroke-width="4"/><circle cx="4" cy="16.500" r="4" fill="#2387c9"/><circle cx="20" cy="16.500" r="4" fill="#2387c9"/><circle cx="12" cy="7.500" r="4.500" fill="#2387c9"/></g>
<g id="i-pca"><path d="M1 0h22v10H1z" fill="#fff"/><text x="3" y="7.500" class="pca">PCA</text><path d="M1 11h11v12H1z" fill="#333"/><path d="M12 11h11v12H12z" fill="#fff" stroke="#333"/><path d="M5 14c4-2 5 2 3 4-1 3-3 4-4 2z" fill="#fff"/><path d="M15 13c4 0 6 4 5 7-3 1-6-4-5-7z" fill="#222"/></g>
<g id="i-stack"><path d="M4 15l3 2 14-2 1 4-5 4-13-2z" fill="#59c335" stroke="#111" stroke-width="1.400"/><path d="M3 10l17-3 2 4-5 4-14 0z" fill="#f9e51f" stroke="#111" stroke-width="1.400"/><path d="M3 7l4-5h14l-1 4-6 3H5z" fill="#1fb4d4" stroke="#111" stroke-width="1.400"/><path d="M13-1v9M12 20v5" stroke="#e11" stroke-width="1.800"/></g>
<g id="i-info"><circle cx="9" cy="8" r="8.500" fill="#1a8f28"/><text x="6" y="13.500" class="ital">i</text><use href="#cursor"/></g>
<g id="i-swipe"><path d="M1 1h22v22H1z" fill="#bfe0ef" stroke="#55789f" stroke-width="1.800"/><path d="M12 2h10v20H12z" fill="#d6e37e"/><path d="M16 2h6v8z" fill="#7cba3d"/><path d="M14 14l8-3v11h-8z" fill="#c3ddeb"/><path d="M12 2v20" stroke="#55789f" stroke-width="1.500"/><path d="M8 12l3-3v6zM16 12l-3-3v6z" fill="#111"/></g>
<g id="i-oeo"><path d="M0 0h24v23H0z" fill="#f4f6f8"/><text x="2" y="8.500" class="oeo">open</text><path d="M0 11h24" stroke="#9ecbe0" stroke-width="1.500"/><path d="M1 15c3-3 8-2 9 2l-3 5-2-4-4 3z" fill="#8a5a33"/><text x="12" y="21" class="oeo">EO</text></g>
<g id="i-green"><path d="M2 4c3 0 5 2 10 2s7-2 10-2c-2 7-2 11 0 17-2-3-5-3-7-1-2-3-5-3-6 0-2-2-5-2-7 1 2-6 2-10 0-17z" fill="#72b36c" stroke="#1b3c18" stroke-width="1.100"/><path d="M3 12h18M12 6v12" stroke="#1b3c18" stroke-width="1.200"/></g>
<g id="i-a1"><path d="M4 20C4 9 9 4 19 3" fill="none" stroke="#999" stroke-width="1.500"/><g fill="#ddd" stroke="#777"><path d="M1 18h4v4H1zM7 6h4v4H7zM17 1h4v4h-4z"/></g><use href="#bStar"/></g>
<g id="i-a2"><circle cx="11" cy="11" r="9" fill="none" stroke="#999" stroke-width="2"/><path d="M2 5h4v4H2zM16 3h4v4h-4z" fill="#ddd" stroke="#777"/><use href="#bStar"/></g>
<g id="i-a3"><ellipse cx="10" cy="11" rx="10" ry="6" transform="rotate(-30 10 11)" fill="none" stroke="#999" stroke-width="2"/><path d="M8 8h4v4H8z" fill="#ddd" stroke="#777"/><use href="#bStar"/></g>
<g id="i-a4"><path d="M3 4h16v14H3z" fill="none" stroke="#999" stroke-width="2"/><path d="M1 2h4v4H1zM17 2h4v4h-4zM1 16h4v4H1z" fill="#ddd" stroke="#777"/><use href="#bStar"/></g>
<g id="i-a5"><path d="M8 2l10 4-1 12-9 3-6-10z" fill="none" stroke="#999" stroke-width="2"/><path d="M7 0h4v4H7zM16 4h4v4h-4zM1 9h4v4H1z" fill="#ddd" stroke="#777"/><use href="#bStar"/></g>
<!-- selection row -->
<g id="i-sel"><path d="M1 2h21v20H1z" fill="none" stroke="#333" stroke-dasharray="2 1.500"/><path d="M2 3h13v13H2z" fill="#fce24d" stroke="#c9a513"/><path d="M9 8v14l4-3 2 5 3-1-2-5h5z" fill="#fff" stroke="#444"/></g>
<g id="i-selx"><path d="M7 8h13v13H7z" fill="#fce24d" stroke="#c9a513" stroke-width="1.500"/><text x="2" y="13" class="eps">ε</text></g>
<g id="i-dsel"><path d="M2 1h13v13H2z" fill="#fce24d" stroke="#c9a513" stroke-width="1.500"/><path d="M6 6h13v13H6z" fill="#fce24d" stroke="#c9a513" stroke-width="1.500"/><path d="M13 13h10v11H13z" fill="#d9333f"/><circle cx="18" cy="18.500" r="3.300" fill="none" stroke="#fff" stroke-width="1.300"/><path d="M16 21l5-5" stroke="#fff"/></g>
<g id="i-sloc"><path d="M2 1h13v13H2z" fill="#fce24d" stroke="#c9a513" stroke-width="1.500"/><path d="M16 16c0-5 7-5 7 0 0 2-3 4-3.500 7-.5-3-3.500-5-3.500-7z" fill="#5b87b5"/><circle cx="19.500" cy="15.500" r="1.300" fill="#fff"/></g>
<g id="i-coat"><path d="M0 0h24v24H0z" fill="#fff"/><path d="M1 2l4 1 7-2 7 2 4-1-2 6c1 8-3 12-9 15C6 20 2 16 3 8z" fill="#ccc" stroke="#777"/><circle cx="12" cy="6" r="2.800" fill="#eee" stroke="#777"/><path d="M5 10h14M6 13l6 6 6-6M8 11l4 4 4-4M9 19l3 3 3-3" fill="none" stroke="#777"/></g>
<g id="i-s2y"><rect width="23" height="24" rx="3" fill="#f3d04b"/><path d="M8 2l8 1 3 4-2 6-9 8" fill="none" stroke="#e8231b" stroke-width="2.400"/><path d="M5 3l7 1 2 4-1 5-9 8" fill="none" stroke="#222" stroke-width="1.400"/></g>
<g id="i-osm"><path d="M18 18l5 5" stroke="#222" stroke-width="4" stroke-linecap="round"/><circle cx="11" cy="11" r="9" fill="#14c6dc" stroke="#222" stroke-width="3"/><path d="M8 9c0-5 7-5 7 0 0 3-3 4-3.500 7C11 13 8 12 8 9z" fill="#156f80"/><circle cx="11.500" cy="9" r="1.300" fill="#14c6dc"/></g>
<g id="i-plot"><path d="M3 23V2M1 4l2-3 2 3M1 21h21M20 19l3 2-3 2M1 8h3M1 12h3M1 16h3M8 19v4M13 19v4M18 19v4" fill="none" stroke="#888"/><path d="M5 17c5 0 7-1 9-8s4-6 8-6" fill="none" stroke="#b3208c" stroke-width="1.700"/><path d="M5 17c5-1 7-6 10-4s4-1 7-1" fill="none" stroke="#37a" stroke-width="1.500"/></g>
<g id="i-edc"><rect x="0" y="1" width="24" height="22" fill="#fff" stroke="#184f78" stroke-width="1.800"/><text x="1.500" y="16.500" class="edc">EDC</text></g>
<g id="i-sld"><path d="M0 0h8v8H0z" fill="#13d2df"/><path d="M8 0h8v8H8z" fill="#6ef58e"/><path d="M16 0h8v8h-8z" fill="#ffcb05"/><path d="M0 8h8v8H0z" fill="#0bb7ea"/><path d="M8 8h8v8H8z" fill="#1fb558"/><path d="M16 8h8v8h-8z" fill="#ff7a1c"/><path d="M0 16h8v8H0z" fill="#25a4e8"/><path d="M8 16h8v8H8z" fill="#b5e61d"/><path d="M16 16h8v8h-8z" fill="#e8404c"/><text x="1" y="7.500" class="sld">S</text><text x="9.500" y="15.500" class="sld">L</text><text x="16.500" y="23.500" class="sld">D</text></g>
<!-- layer sources -->
<g id="p-vec"><use href="#vee"/><use href="#bPlus"/></g>
<g id="p-ras"><use href="#raster"/><use href="#bPlus"/></g>
<g id="p-mesh"><rect x="1" y="1" width="21" height="21" fill="#7ea5d0" stroke="#1f4061" stroke-width="1.300"/><path d="M1 13h21M12 1v12M1 1l11 12M12 1L1 13M12 13L22 1M6 13v9M12 13v9M1 18h13" fill="none" stroke="#1f4061"/><use href="#bPlus"/></g>
<g id="p-csv"><path d="M4 7c0-8 12-7 12 1 0 6-5 9-8 10 3-3 4-5 3-7-4 0-7-1-7-4z" fill="#5b8ac4" stroke="#31557f"/><use href="#bPlus"/></g>
<g id="p-fea"><use href="#feather"/><use href="#bPlus"/></g>
<g id="p-virt"><rect x="1" y="1" width="21" height="21" rx="1.500" fill="url(#gBlue)" stroke="#5a80ab" stroke-width="1.400"/><g transform="translate(1 1) scale(.85)"><use href="#vee"/></g><use href="#bPlus"/></g>
<g id="p-pg"><path d="M1 3c2-3 5-2 7-1 3-2 7-1 8 1 2 4 1 7 0 9l-3 0-1 6h-3l-1-6c-5 1-7-4-7-9z" fill="#4f80b6" stroke="#1f4061"/><path d="M6 2c-2 4-1 8 1 9M11 2c3 3 3 7 0 10" fill="none" stroke="#1f4061"/><use href="#bPlus"/></g>
<g id="p-wms"><use href="#world"/><use href="#bPlus"/></g>
<g id="p-wcs"><circle cx="12" cy="11" r="11" fill="#4f80b6" stroke="#1f4061"/><path d="M4 3l4 0v4H2zM17 3l3 1 2 3h-5zM2 16h6v5zM17 16h5l-4 4z" fill="#1c3c5f"/><path d="M1 7.500h22M1 15h22M8 1v21M16 1v21" stroke="#fff" stroke-width="1.300"/><use href="#bPlus"/></g>
<g id="p-wfs"><circle cx="12" cy="11" r="11" fill="#eef4fb" stroke="#5b8ac4"/><path d="M1 8h22M1 14h22M6 2c-4 6-4 12 0 18M18 2c4 6 4 12 0 18" fill="none" stroke="#8db0da"/><g transform="translate(4 3) scale(.75)"><use href="#vee"/></g><use href="#bPlus"/></g>
</defs>
</svg>

<header class="title"><span class="lights"><i></i><i></i><i></i></span><b>*Untitled Project — QGIS</b></header>

<nav class="bar">
<i class="grip first"></i>
<svg class="t"><use href="#i-new"/></svg><svg class="t"><use href="#i-open"/></svg><svg class="t"><use href="#i-save"/></svg><svg class="t"><use href="#i-layout"/></svg><svg class="t"><use href="#i-mgr"/></svg><svg class="t"><use href="#i-style"/></svg>
<i class="grip"></i>
<svg class="t"><use href="#i-hand"/></svg><svg class="t"><use href="#i-pan"/></svg><svg class="t on"><use href="#i-zin"/></svg><svg class="t"><use href="#i-zout"/></svg><svg class="t"><use href="#i-zfull"/></svg><svg class="t"><use href="#i-zsel"/></svg><svg class="t"><use href="#i-zlay"/></svg><svg class="t off"><use href="#i-znat"/></svg><svg class="t"><use href="#i-zlast"/></svg><svg class="t off"><use href="#i-znext"/></svg><svg class="t"><use href="#i-nmap"/></svg><svg class="t"><use href="#i-n3d"/></svg><svg class="t"><use href="#i-nbm"/></svg><svg class="t"><use href="#i-bm"/></svg><svg class="t"><use href="#i-clock"/></svg><svg class="t"><use href="#i-refresh"/></svg>
<i class="grip"></i>
<svg class="t"><use href="#i-ident"/></svg><svg class="t"><use href="#i-table"/></svg><svg class="t"><use href="#i-abacus"/></svg><svg class="t"><use href="#i-gear"/></svg><svg class="t"><use href="#i-sigma"/></svg><svg class="t"><use href="#i-ruler"/></svg><i class="dd"></i><svg class="t on"><use href="#i-tips"/></svg><svg class="t off"><use href="#i-action"/></svg><i class="dd"></i><svg class="t"><use href="#i-text"/></svg><i class="dd"></i>
<i class="grip"></i>
<svg class="t off"><use href="#i-cad"/></svg><svg class="t off"><use href="#i-tri"/></svg><svg class="t off"><use href="#i-mv"/></svg><i class="dd"></i><svg class="t off"><use href="#i-rot"/></svg><svg class="t off"><use href="#i-simp"/></svg><svg class="t off"><use href="#i-ring"/></svg><svg class="t off"><use href="#i-part"/></svg><svg class="t off"><use href="#i-fring"/></svg><svg class="t off"><use href="#i-dring"/></svg><svg class="t off"><use href="#i-dpart"/></svg><svg class="t off"><use href="#i-reshape"/></svg><svg class="t off"><use href="#i-offset"/></svg><svg class="t off"><use href="#i-revl"/></svg><svg class="t off"><use href="#i-trim"/></svg><svg class="t off"><use href="#i-splitf"/></svg><svg class="t off"><use href="#i-splitf"/></svg><svg class="t off"><use href="#i-merge"/></svg><svg class="t off"><use href="#i-mergea"/></svg><svg class="t off"><use href="#i-rotsym"/></svg><i class="dd"></i>
</nav>

<nav class="bar">
<i class="grip first"></i>
<svg class="t off"><use href="#i-pens"/></svg><svg class="t"><use href="#i-pencil"/></svg><svg class="t off"><use href="#i-sedit"/></svg><svg class="t off"><use href="#i-addpoly"/></svg><svg class="t off"><use href="#i-vtool"/></svg><i class="dd"></i><svg class="t off"><use href="#i-attr"/></svg><svg class="t off"><use href="#i-trash"/></svg><svg class="t off"><use href="#i-cut"/></svg><svg class="t off"><use href="#i-copy"/></svg><svg class="t off"><use href="#i-paste"/></svg><svg class="t off"><use href="#i-undo"/></svg><svg class="t off"><use href="#i-redo"/></svg>
<i class="grip"></i>
<svg class="t"><use href="#i-dsm"/></svg><svg class="t"><use href="#i-gpkg"/></svg><svg class="t"><use href="#i-vnew"/></svg><svg class="t"><use href="#i-fnew"/></svg><svg class="t"><use href="#i-mem"/></svg><i class="sep"></i><svg class="t"><use href="#i-virt"/></svg><i class="sep"></i>
<i class="grip"></i>
<svg class="t"><use href="#i-lab"/></svg><svg class="t"><use href="#i-diag"/></svg><i class="sep"></i><svg class="t"><use href="#i-lpin"/></svg><svg class="t"><use href="#i-lunp"/></svg><i class="sep"></i><svg class="t off"><use href="#i-l1"/></svg><svg class="t off"><use href="#i-l2"/></svg><svg class="t off"><use href="#i-l3"/></svg><svg class="t off"><use href="#i-l4"/></svg><svg class="t off"><use href="#i-l5"/></svg>
<i class="grip"></i>
<svg class="t"><use href="#i-db"/></svg>
<i class="grip"></i>
<svg class="t"><use href="#i-hex"/></svg><svg class="t"><use href="#i-wadd"/></svg><svg class="t"><use href="#i-wsea"/></svg><svg class="t"><use href="#i-plug"/></svg><svg class="t"><use href="#i-wbin"/></svg>
<i class="grip"></i>
<svg class="t"><use href="#i-orbit"/></svg>
<i class="grip"></i>
<svg class="t"><use href="#i-help"/></svg>
<i class="grip"></i>
<svg class="t"><use href="#i-topo"/></svg><svg class="t"><use href="#i-reload"/></svg><svg class="t"><use href="#i-cross"/></svg>
<span class="fill"></span>
<i class="grip"></i>
<svg class="t"><use href="#i-ringk"/></svg><i class="dd"></i><svg class="t"><use href="#i-xy"/></svg><svg class="t"><use href="#i-pts"/></svg><svg class="t"><use href="#i-xcut"/></svg><i class="dd"></i><svg class="t"><use href="#i-brk"/></svg><svg class="t"><use href="#i-rul2"/></svg><svg class="t"><use href="#i-123"/></svg><svg class="t"><use href="#i-bred"/></svg><i class="dd"></i><svg class="t off"><use href="#i-azd"/></svg>
<span class="more">»</span>
</nav>

<nav class="bar">
<i class="grip first"></i>
<svg class="t off"><use href="#i-h1"/></svg><svg class="t off"><use href="#i-h2"/></svg><svg class="t off"><use href="#i-h1"/></svg><svg class="t off"><use href="#i-h2"/></svg><svg class="t off"><use href="#i-s1"/></svg><svg class="t off"><use href="#i-s2"/></svg><svg class="t off"><use href="#i-c1"/></svg><svg class="t off"><use href="#i-c2"/></svg><svg class="t off"><use href="#i-g1"/></svg><svg class="t off"><use href="#i-g2"/></svg>
<i class="grip"></i>
<svg class="t on"><use href="#i-magnet"/></svg><svg class="t"><use href="#i-snapv"/></svg><svg class="t on"><use href="#i-snapp"/></svg>
<span class="field spin snap"><span>0</span><i class="ud"></i></span>
<span class="field combo unit">px<i class="box"></i></span>
<svg class="t"><use href="#i-t1"/></svg><svg class="t"><use href="#i-t2"/></svg><svg class="t"><use href="#i-t3"/></svg><svg class="t"><use href="#i-t4"/></svg><i class="dd"></i><svg class="t"><use href="#i-t5"/></svg>
<i class="grip"></i>
<svg class="t"><use href="#i-py"/></svg><svg class="t"><use href="#i-rast"/></svg><svg class="t"><use href="#i-clk2"/></svg><svg class="t"><use href="#i-fold"/></svg><svg class="t"><use href="#i-fire"/></svg><svg class="t"><use href="#i-four"/></svg><svg class="t"><use href="#i-frames"/></svg><svg class="t"><use href="#i-earth"/></svg><svg class="t"><use href="#i-binoc"/></svg><svg class="t"><use href="#i-ref"/></svg><svg class="t"><use href="#i-biv"/></svg><svg class="t"><use href="#i-leaf"/></svg><svg class="t"><use href="#i-grid"/></svg><svg class="t"><use href="#i-tri3"/></svg><svg class="t"><use href="#i-pca"/></svg><svg class="t"><use href="#i-stack"/></svg><svg class="t"><use href="#i-info"/></svg><svg class="t"><use href="#i-swipe"/></svg><svg class="t"><use href="#i-oeo"/></svg><svg class="t"><use href="#i-green"/></svg>
<i class="grip"></i>
<svg class="t off"><use href="#i-a1"/></svg><i class="dd"></i><svg class="t off"><use href="#i-a2"/></svg><i class="dd"></i><svg class="t off"><use href="#i-a3"/></svg><i class="dd"></i><svg class="t off"><use href="#i-a4"/></svg><i class="dd"></i><svg class="t off"><use href="#i-a5"/></svg><i class="dd"></i>
</nav>

<nav class="bar last">
<i class="grip first"></i>
<svg class="t"><use href="#i-sel"/></svg><i class="dd"></i><svg class="t"><use href="#i-selx"/></svg><i class="dd"></i><svg class="t"><use href="#i-dsel"/></svg><i class="dd"></i><svg class="t"><use href="#i-sloc"/></svg>
<i class="grip"></i>
<svg class="t"><use href="#i-coat"/></svg>
<i class="grip"></i>
<svg class="t"><use href="#i-s2y"/></svg>
<i class="grip"></i>
<svg class="t"><use href="#i-osm"/></svg>
<span class="button country">Philippines<i class="tri"></i></span>
<span class="field find">Search for...</span>
<i class="grip"></i>
<svg class="t"><use href="#i-plot"/></svg>
<i class="grip"></i>
<i class="grip"></i>
<svg class="t"><use href="#i-edc"/></svg>
<i class="grip"></i>
<svg class="t"><use href="#i-sld"/></svg>
<i class="grip"></i>
</nav>

<main>
<nav class="side">
<i class="hgrip"></i>
<div><svg class="t"><use href="#p-vec"/></svg></div>
<div><svg class="t"><use href="#p-ras"/></svg></div>
<div><svg class="t"><use href="#p-mesh"/></svg></div>
<div><svg class="t"><use href="#p-csv"/></svg></div>
<div><svg class="t"><use href="#p-fea"/></svg></div>
<div><svg class="t"><use href="#p-virt"/></svg></div>
<div><svg class="t"><use href="#p-pg"/></svg><i class="tri"></i></div>
<div><svg class="t"><use href="#p-wms"/></svg><i class="tri"></i></div>
<div><svg class="t"><use href="#p-wcs"/></svg></div>
<div><svg class="t"><use href="#p-wfs"/></svg><i class="tri"></i></div>
<div><svg class="t"><use href="#i-vnew"/></svg><i class="tri"></i></div>
</nav>

<section class="layers">
<h2>Layers<span class="winbtns"><svg viewBox="0 0 11 11"><rect x=".5" y=".5" width="10" height="10" rx="1.500" fill="none" stroke="#666"/><path d="M4.500 2.500h4v4h-4zM2.500 4.500h4v4h-4z" fill="#ebebeb" stroke="#666" stroke-width=".9"/></svg><svg viewBox="0 0 11 11"><rect x=".5" y=".5" width="10" height="10" rx="1.500" fill="none" stroke="#666"/><path d="M3 3l5 5m0-5L3 8" stroke="#555" stroke-width="1.700"/></svg></span></h2>
<div class="ltools">
<svg class="s on" viewBox="0 0 24 24"><use href="#brush"/></svg>
<svg class="s" viewBox="0 0 24 24"><use href="#layerGrp"/><use href="#bPlus"/></svg>
<svg class="s" viewBox="0 0 24 24"><path d="M0 12C5 4 18 4 23 12c-5 7-18 7-23 0z" fill="#fff" stroke="#888" stroke-width="1.500"/><circle cx="12" cy="12" r="5.500" fill="#7697c0" stroke="#456"/><circle cx="12" cy="12" r="2.400" fill="#123"/><path d="M17 21h8l-4 4z" fill="#333"/></svg>
<svg class="s" viewBox="0 0 24 24"><path d="M1 1h22v4H1z" fill="#f8e145" stroke="#b9a02c"/><path d="M1 6h22l-8 8v9l-5-3v-6z" fill="#5b8ac4" stroke="#31557f"/></svg>
<svg class="s off" viewBox="0 0 24 24"><text x="0" y="16" class="eps">ε</text><path d="M12 13h11v6l-3 0v4h-4v-4h-4z" fill="#aaa" stroke="#888"/></svg><i class="dd"></i>
<svg class="s" viewBox="0 0 24 24"><path d="M1 2h20M4 2v19M4 10h4M4 20h4" stroke="#777" stroke-width="1.500" fill="none"/><path d="M7 8h4v4H7zM7 17h4v4H7z" fill="#fff" stroke="#e98b15" stroke-width="1.700"/><path d="M14 2h5v12h4l-6.500 8-6.500-8h4z" fill="#5b8ac4" stroke="#31557f"/></svg>
<svg class="s" viewBox="0 0 24 24"><path d="M1 2h20M4 2v19M4 10h4M4 20h4" stroke="#777" stroke-width="1.500" fill="none"/><path d="M7 8h4v4H7zM7 17h4v4H7z" fill="#fff" stroke="#e98b15" stroke-width="1.700"/><path d="M14 22h5V9h4l-6.500-8L10 9h4z" fill="#5b8ac4" stroke="#31557f"/></svg>
<svg class="s" viewBox="0 0 24 24"><path d="M2 2h18v18H2z" fill="#f1f1f1" stroke="#666" stroke-width="1.500"/><rect x="14" y="15" width="10" height="8" rx="2" fill="#d9333f"/><path d="M16 19h6" stroke="#fff" stroke-width="2"/></svg>
</div>
<div class="tree">
<div class="row"><i class="tw"></i><svg class="ck"><use href="#tick"/></svg><i class="sw red"></i><b class="cur"><u>module5 territories</u></b></div>
<div class="row"><i class="tw"><i class="tri"></i></i><svg class="ck"><use href="#tick"/></svg><svg class="li" viewBox="0 0 24 24"><use href="#layerGrp"/></svg><span>module5</span></div>
<div class="row in"><i class="tw"></i><svg class="ck"><use href="#tick"/></svg><svg class="li" viewBox="0 0 16 16"><circle cx="8" cy="8" r="3.400" fill="#fff" stroke="#e8777b"/><circle cx="8" cy="8" r="1.600" fill="#d9333f"/></svg><b>clinics</b></div>
<div class="row in"><i class="tw"><i class="tri right"></i></i><svg class="ck"><use href="#tick"/></svg><svg class="li" viewBox="0 0 16 16"><g transform="translate(2 2) scale(.65)"><path d="M0 0h20v20H0z" fill="#a9c6e6"/><path d="M0 0h7v7H0zM15 0h5v7h-5zM7 7h6v7H7zM0 15h7v5H0zM13 14h7v6h-7z" fill="#20405f"/></g></svg><b>HRSL_AU_Tasmania_Population</b></div>
<div class="row in"><i class="tw"></i><svg class="ck"><use href="#tick"/></svg><i class="sw pale"></i><b>tasmania</b></div>
</div>
</section>

<section class="map">
<!-- map units are thirds of a pixel -->
<svg class="aus" viewBox="-177 -33 2667 2343">
<defs>
<filter id="sh" x="-30%" y="-30%" width="170%" height="170%"><feGaussianBlur stdDeviation="11"/></filter>
<path id="tas" d="M437 515L436 500 441 491 448 496 453 508 468 514 490 520 522 528 532 524 545 526 560 520 580 518 590 512 600 514 605 509 613 518 611 532 615 546 612 560 614 572 607 580 609 592 602 600 604 612 596 608 598 628 592 618 584 612 588 602 578 606 572 612 568 604 562 616 556 608 556 622 550 628 556 636 545 636 543 646 530 644 518 650 510 645 500 638 497 628 488 624 482 612 472 600 468 588 462 578 458 568 462 560 452 550 446 538 442 530 438 526z"/>
<path id="isl" d="M398 456L404 453 411 460 409 476 402 480 397 470zM587 460L595 455 600 465 612 474 615 488 621 490 616 498 602 497 600 488 602 482 592 474z"/>
</defs>
<g class="land">
<path d="M523 378L528 390 536 404 542 418 552 431 551 418 555 415 561 420 558 410 568 410 562 404 566 398 556 388 545 382 552 374 560 378 566 368 574 375 590 378 617 376 600 372 604 364 596 356 600 345 612 342 606 334 620 332 640 341 628 330 616 324 622 318 604 322 600 314 590 326 585 322 596 316 606 318 604 306 612 308 622 306 616 298 626 296 618 286 632 278 636 290 646 284 654 290 652 276 660 272 666 282 674 284 668 270 672 262 680 268 686 260 692 268 700 262 706 266 712 256 708 250 718 246 724 252 735 254 744 260 750 268 758 280 768 288 778 293 774 302 768 312 772 318 769 331 775 316 784 331 780 318 778 308 792 297 800 299 810 298 818 302 824 308 822 316 829 312 830 304 838 314 836 302 846 312 846 302 857 298 850 294 852 286 842 284 838 277 833 277 838 268 848 262 850 250 856 246 852 236 858 232 864 236 874 228 866 222 872 216 866 212 878 206 876 196 884 198 890 188 898 196 896 186 908 190 906 180 914 184 912 174 918 166 924 174 935 176 960 173 985 172 992 164 993 152 988 140 978 136 972 140 970 130 958 130 962 124 976 126 984 120 990 116 992 128 1000 130 1012 140 1018 150 1026 146 1032 136 1030 150 1042 152 1052 150 1058 158 1070 160 1078 166 1090 162 1104 166 1116 174 1128 170 1134 162 1142 168 1150 160 1162 148 1176 142 1186 130 1191 116 1193 114 1192 124 1184 138 1172 146 1160 158 1152 166 1156 174 1162 182 1172 180 1182 172 1174 164 1184 164 1180 154 1192 158 1190 166 1200 174 1194 180 1201 181 1194 190 1186 198 1188 208 1180 212 1172 210 1172 220 1160 218 1162 226 1150 228 1149 240 1158 246 1152 256 1148 270 1138 280 1132 290 1127 297 1136 304 1144 310 1154 312 1160 320 1168 324 1172 334 1180 338 1190 350 1204 350 1215 353 1226 360 1236 365 1244 374 1253 384 1262 389 1278 393 1292 394 1304 402 1308 412 1320 420 1332 430 1346 434 1356 440 1368 437 1380 434 1392 426 1398 416 1395 404 1404 392 1412 382 1415 370 1419 352 1417 340 1424 324 1427 308 1432 304 1428 290 1424 280 1428 264 1422 250 1424 236 1430 226 1434 212 1428 204 1436 196 1442 192 1430 186 1434 172 1440 166 1446 160 1444 148 1452 140 1454 122 1456 112 1462 106 1470 110 1468 100 1474 104 1482 100 1480 108 1486 114 1488 126 1494 130 1490 144 1492 156 1504 160 1500 168 1504 178 1512 182 1516 192 1514 204 1522 206 1521 220 1525 232 1522 242 1529 254 1530 268 1538 278 1544 283 1556 282 1554 274 1564 276 1570 270 1574 280 1580 282 1586 290 1596 290 1600 298 1610 304 1604 314 1608 324 1608 336 1614 348 1612 360 1616 372 1614 380 1624 388 1634 398 1642 402 1640 412 1648 422 1644 434 1650 444 1644 454 1648 462 1654 466 1652 478 1658 486 1656 496 1664 506 1674 508 1680 516 1692 514 1698 522 1710 524 1714 518 1720 532 1728 544 1736 540 1742 548 1752 550 1762 552 1768 558 1778 558 1782 568 1772 576 1776 584 1788 594 1796 602 1800 614 1808 626 1810 640 1814 652 1822 660 1832 664 1836 676 1836 658 1846 662 1852 672 1862 664 1868 672 1876 680 1874 694 1880 700 1876 718 1886 724 1894 726 1898 738 1908 742 1914 748 1924 748 1932 756 1936 766 1944 774 1954 780 1958 792 1962 802 1972 808 1978 806 1986 812 1988 800 1994 792 1992 780 1998 790 1997 798 1990 810 1986 822 1984 832 1990 840 1986 852 1988 870 1990 890 1988 902 1994 912 1978 918 1994 918 1998 926 2000 938 2004 944 2008 950 2010 962 2012 974 2004 990 2000 1000 2000 1016 1994 1030 1992 1044 1984 1058 1986 1070 1982 1084 1984 1098 1978 1112 1974 1124 1964 1136 1960 1144 1962 1152 1952 1160 1946 1166 1936 1166 1928 1176 1916 1184 1910 1196 1900 1206 1896 1202 1900 1214 1892 1212 1896 1224 1890 1236 1880 1246 1882 1258 1876 1264 1876 1278 1872 1286 1864 1288 1862 1298 1854 1308 1846 1322 1844 1338 1838 1352 1838 1366 1832 1372 1836 1384 1834 1400 1824 1408 1812 1414 1780 1414 1760 1416 1742 1422 1726 1430 1708 1444 1694 1454 1684 1460 1670 1458 1660 1464 1664 1474 1656 1480 1652 1470 1640 1468 1638 1460 1626 1456 1618 1452 1610 1450 1604 1442 1594 1446 1590 1438 1598 1432 1598 1424 1588 1420 1586 1428 1580 1432 1570 1428 1562 1430 1574 1434 1578 1440 1564 1442 1550 1448 1536 1458 1524 1466 1516 1460 1506 1462 1496 1454 1484 1452 1472 1444 1460 1444 1446 1446 1438 1440 1424 1444 1416 1438 1412 1432 1398 1427 1380 1427 1370 1420 1360 1406 1348 1396 1338 1386 1342 1376 1336 1370 1343 1360 1338 1344 1326 1326 1308 1312 1290 1304 1274 1310 1260 1310 1266 1304 1272 1294 1278 1280 1276 1264 1268 1256 1266 1246 1258 1240 1250 1250 1246 1268 1242 1284 1232 1288 1218 1286 1200 1292 1204 1280 1212 1274 1222 1276 1228 1268 1226 1254 1232 1236 1240 1218 1246 1206 1244 1194 1254 1188 1248 1180 1246 1168 1242 1158 1244 1178 1234 1182 1230 1194 1222 1206 1214 1216 1200 1220 1182 1232 1170 1242 1164 1252 1154 1258 1160 1266 1150 1264 1144 1276 1136 1276 1130 1266 1126 1252 1118 1250 1120 1234 1112 1222 1102 1214 1096 1204 1098 1194 1088 1188 1076 1188 1066 1186 1064 1176 1072 1168 1062 1162 1056 1152 1048 1142 1034 1140 1024 1144 1010 1138 1000 1134 984 1130 974 1136 962 1128 944 1118 930 1112 920 1107 906 1113 880 1112 850 1114 817 1118 800 1126 770 1136 748 1142 710 1148 690 1147 672 1146 652 1158 640 1160 620 1172 606 1180 586 1183 576 1192 574 1204 566 1214 556 1224 540 1222 520 1228 500 1224 484 1228 460 1222 430 1222 400 1226 372 1230 358 1238 350 1252 336 1250 320 1260 310 1270 296 1274 286 1282 268 1278 250 1282 230 1278 216 1282 200 1278 184 1270 170 1258 154 1248 138 1246 135 1230 134 1210 144 1214 156 1212 166 1200 170 1186 164 1172 170 1160 168 1146 173 1128 164 1110 152 1088 142 1064 136 1040 134 1020 133 1000 128 990 116 976 114 966 102 954 93 940 94 924 90 908 80 890 68 874 54 862 48 846 40 836 34 822 38 818 44 834 52 848 64 860 72 874 82 870 76 856 66 846 62 832 58 824 68 822 76 842 84 858 92 864 96 856 98 842 92 824 82 808 76 794 70 790 70 776 58 766 60 750 64 736 72 724 76 716 74 700 76 688 70 680 76 664 82 648 88 640 94 638 92 650 95 668 104 670 110 656 112 646 120 636 136 632 152 628 164 620 176 606 188 598 202 590 216 582 232 584 240 580 252 586 268 584 282 574 290 570 308 568 322 564 330 554 342 549 358 553 372 548 398 545 420 536 436 528 446 516 454 502 458 490 464 488 466 478 480 466 490 462 493 456 486 454 486 440 484 420 490 408 500 402 502 394 512 394 514 384z"/>
<path d="M872 150L880 142 872 134 876 128 884 122 890 132 898 126 908 128 916 132 922 124 930 126 937 130 938 140 928 144 922 154 912 158 900 150 890 148 880 152zM1175 262L1181 250 1190 248 1188 242 1198 240 1194 252 1196 260 1202 270 1192 272 1182 270zM1305 388L1314 380 1326 376 1342 380 1328 382 1322 390 1314 398 1308 402zM1310 408L1322 404 1332 410 1322 410zM1183 1320L1196 1312 1226 1306 1236 1308 1250 1304 1256 1312 1252 1320 1236 1324 1230 1330 1194 1330 1184 1326zM150 597L155 583 160 588zM57 823L64 822 72 834 78 852 72 854 64 842z"/>
</g>
<g class="bord">
<path d="M817 302V1117M1253 384V841M817 841H1396L1399 846V990M1399 988H1784l8-7 20-14 14 2 10-3 16 1 10 3 10-1 12 7 8 6 8 4 0 8 7 8 10-12 12 0 8-3 1-8-3-10 8-6 12-4 8-3 12 4 16-2 12 1 16-4M1399 990V1233L1397 1235V1427M1397 1233l10-1 20 5 18-1 12 8 8 14 6 10 12-8 10 2 16 6-1 12 12 12 16 10 20 14 22 16 6 0 6-12 14 0 14-2 10 6 40 2 22 5 16-5 14-1 14 0 4 12 4 14 6 8-3 6 86 34"/>
<path d="M1780 1294l8-8 10 4 0 4 8-1-4 8-2 10-6 12-10-4-3-14z"/>
</g>
<!-- islets and reefs -->
<g class="specks">
<path d="M524 173l7 2M462 263l8-8 3 8-8 5zM475 241l3 4M481 398l3 0M158 572l6-3-2 14M205 580l6-6 4 8 6-10 4 8 5-8 4 6 6-4M100 640l4-6 6 4M120 628l8-4M132 618l6 4M146 612l6-2M160 612l8-6M172 604l8-8M46 783l-3 14-2 10M68 954l6 3M72 965l6 3M78 975l6 3M82 984l6 0M158 1134l8 2M174 1134l8-1M164 1150l6-2M170 1162l-4 6M540 370l10-12 6 10 6-8 4 12 10-4 8 6 6-8M545 378l10-6 14 6 10-10 14 6M538 362l8-4M548 356l4 6M590 318l8-8 6 8 8-6 4 6 10-8 4 6M584 324l10-2M596 328l8-2M625 300l6-12 6 6 6-8 6 4M620 290l6-4M648 276l4-6 6 6 4-10M680 256l6 2M690 250l4 5M700 252l8-3M694 264l6 2M460 1230l8 3M472 1226l6 8M482 1238l8-5M498 1228l4 10M508 1232l6-4M520 1236l8-4M532 1230l6 6M545 1228l8 6M550 1246l3 3M574 1220l5 4M1020 1160l8-8M1030 1152l8 4M1040 1158l6-8M1048 1162l6-6M1075 1218l8-2M1112 1255l8 6M1120 1268l6-4M1146 1278l6 4 8-6 4 6M1158 1262l6 2M1168 1250l5 5M1166 1288l6-2M1178 1292l4 2M1195 1292l6 2M990 112l4 6M1004 118l4 4M1088 160l6-4M1100 162l6-4M1112 150l3 3M1140 160l10-6M1144 168l12-4M1160 236l8 4M1166 228l6 8M1158 226l4 6M1176 244l8-4M1190 246l4-8M1190 338l6-2 4 6 6-4M1180 346l8 2M1142 302l4-2M1185 155l4-4M1195 150l4 2"/>
<path d="M1454 28l8 2M1474 36l10 0M1452 66l8 6-6 6M1458 68l6 4M1454 94l8 4-2 6M1466 68l4 0M1545 61l3 2M1500 150l8 4M1508 160l6 6M1514 180l6 10M1516 200l3 8M1556 265l6-4M1565 272l6-4M1580 286l6 4M1610 292l6 2M1606 300l4 10M1646 466l8 4 2 8M1650 464l6 6M1668 486l8 6M1672 480l0 8M1672 512l6 2M1688 514l6 0M1700 522l12 0M1760 548l8 4M1776 560l10 4 8-4M1782 570l8 2 4-8M1786 556l4 10M1780 562l12 8M1800 586l6 4M1806 592l8-2M1818 596l4-2M1820 614l6-4M1824 630l6-4M1826 646l4 4M1848 628l6 4M1850 636l8 2M1864 646l6 4M1832 655l8 4M1850 664l6 4M1880 702l4 6M1884 724l10 2M1890 730l8 8M1920 746l6 2M1969 646v14M2049 597l3 2M1974 812l6 12M1976 822l6 2M2000 890v12M2006 886l0 6M2004 908l2 8M1998 918l4 16 2-8M2276 1110l3 2M1890 1208l8-2M1892 1216l6 6M1868 1286l8-2M1920 1185l8-6M1565 1430l10-3M1590 1442l10-4M1606 1440l10 4M1612 1436l6 6M1656 1460l12-2 16-2M1656 1478l6 4M1688 1483h3M1671 1496h3M1704 1496l5 2M1190 1306l30-4"/>
</g>
<g class="faint"><path d="M1421 54l6-14M1480 64l8-14 10-4 12-6 22-4M1486 72l10-8 12-6 12-6M1548 186h2M550 265h2M532 332h2M334 528v3M1836 370v-8M1850 382l5 4M1795 402l5 0M1828 402l5 0M1954 636h3M2018 632h3M2100 656h3M2104 710h3M1864 710l6 2M1925 712l8 4M1968 748l4 2M1534 124l6 12M1500 150l-10-40M1525 260l-8-60M1915 715l16 6M1808 590l50 60"/></g>
<path class="cay" d="M1987 850v50M2012 945v26M1984 1070l2-10M1894 1210v16M1962 1140v12"/>
<g transform="translate(1140 1050)">
<g class="shadow" filter="url(#sh)" transform="translate(9 11)"><use href="#tas"/><use href="#isl"/></g>
<g class="clinic"><circle cx="499" cy="520" r="21"/><circle cx="489" cy="520" r="22"/><circle cx="489" cy="520" r="15"/><path d="M491 506v18M482 516h18"/><circle cx="471" cy="577" r="12"/></g>
<g class="land"><use href="#tas"/><use href="#isl"/></g>
<path d="M464 568L472 580 484 592 476 588 466 578zM440 498L448 494 454 506 446 508z" fill="#fff"/>
<g class="clinic"><circle cx="576" cy="628" r="9"/></g>
<path class="bay" d="M464 568l12 12 12 14M466 580l10 8M440 508l8-14M552 616l8 6 4-12 8 6 4-8M538 525l18 16M556 628l10 4 8-14M578 608l8-4 4 10M604 580l6-10"/>
</g>
<ellipse cx="2268" cy="2236" rx="14" ry="20" fill="#bbb" opacity=".25"/><path d="M2260 2246l4-6M2270 2236l4-12" stroke="#444" fill="none" stroke-width="3.500"/>
</svg>
</section>

<section class="styling">
<h2>Layer Styling<span class="winbtns"><svg viewBox="0 0 11 11"><rect x=".5" y=".5" width="10" height="10" rx="1.500" fill="none" stroke="#666"/><path d="M4.500 2.500h4v4h-4zM2.500 4.500h4v4h-4z" fill="#ebebeb" stroke="#666" stroke-width=".9"/></svg><svg viewBox="0 0 11 11"><rect x=".5" y=".5" width="10" height="10" rx="1.500" fill="none" stroke="#666"/><path d="M3 3l5 5m0-5L3 8" stroke="#555" stroke-width="1.700"/></svg></span></h2>
<div class="button sel layer"><svg width="17" height="14" viewBox="0 0 17 14"><path d="M1 3c4-3 5 1 8 0s5-2 7 0v7c-3 2-5-2-8 0s-5 1-6 2z" fill="#ddd" stroke="#999"/></svg>module5 territories<i class="tri"></i></div>
<div class="cols">
<div class="tabs">
<span class="active"><svg viewBox="0 0 24 24"><use href="#brush"/></svg></span>
<span><svg viewBox="0 0 24 24"><path d="M5 5h17v12H5L1 11z" fill="#f8dc3f" stroke="#c9a513"/><text x="5.500" y="14.500" class="tgb">abc</text></svg></span>
<span><svg viewBox="0 0 24 24"><path d="M2 17c-4-2-3-8 1-8 2-5 8-5 9-1 4-3 10-1 11 4s-3 6-6 5c-3 2-6 2-8 0-2 1-5 1-7 0z" fill="#d9e2f2"/><text x="1" y="16" class="abc">abc</text></svg></span>
<span><svg viewBox="0 0 24 24"><path d="M12 0l10 6-10 7L2 6z" fill="#f66" stroke="#b01818"/><path d="M2 7l10 6v10L2 17z" fill="#7fd23c" stroke="#3b8a17"/><path d="M22 7l-10 6v10l10-6z" fill="#fbe34c" stroke="#b99a12"/></svg></span>
<span><svg viewBox="0 0 24 24"><path d="M11 6v12M4 17V9h15v8" fill="none" stroke="#c98128" stroke-width="2.600"/><path d="M7 1h9v7H7z" fill="#ee4f57" stroke="#a33"/><path d="M1 17h9v6H1z" fill="#fbe34c" stroke="#a88c12"/><path d="M14 17h9v6h-9z" fill="#84b4ea" stroke="#3f6fa5"/></svg></span>
<span><svg viewBox="0 0 24 24"><path d="M8 1v3C4 4 1 7 2 10c1 2 2 3 4 3-2-3-1-5 2-4v3l6-5z" fill="#6aa372"/><path d="M15 9v3c7-1 9 3 8 6-1 3-4 4-6 4 3-3 2-6-2-5v3l-6-6z" fill="#e8792d"/></svg></span>
</div>
<div class="page">
<div class="button sel"><svg width="14" height="14" viewBox="0 0 14 14"><path d="M1 1h10v3H1zM3 5.500h10v3H3zM1 10h10v3H1z" fill="#19b35c" stroke="#0a5c2c"/></svg>Single Symbol<i class="tri"></i></div>
<div class="symbol">
<div class="preview"><i></i></div>
<div class="stree">
<div class="srow head"><i class="tri"></i><i class="sw fade"></i><b>Fill</b></div>
<div class="srow sub"><i class="sw red"></i><span>Simple Fill</span></div>
</div>
<div class="ops">
<span class="button"><svg viewBox="0 0 16 16"><path d="M6 2h4v4h4v4h-4v4H6v-4H2V6h4z" fill="#fff" stroke="#4a8450" stroke-width="1.300"/><path d="M8 4v8M4 8h8" stroke="#4a8450" stroke-width="1.200"/></svg></span>
<span class="button dim"><svg viewBox="0 0 16 16"><path d="M8 3l6 10H2z" fill="#a5b1c4" stroke="#888"/></svg></span>
<span class="button dim"><svg viewBox="0 0 16 16"><path d="M2 6h12v4H2z" fill="#fff" stroke="#b88"/><path d="M4 8h8" stroke="#b88"/></svg></span>
<span class="button dim"><svg viewBox="0 0 16 16"><path d="M8 13L2 3h12z" fill="#a5b1c4" stroke="#888"/></svg></span>
<span class="button dim"><svg viewBox="0 0 16 16"><path d="M2 4v10h9M4 2h9v11H4z" fill="#fff" stroke="#888"/><path d="M9 9h6v5H9z" fill="#bbb"/></svg></span>
<span class="button dim"><svg viewBox="0 0 16 16"><path d="M2 8h12v7H2z" fill="#b8a98a" stroke="#998"/><path d="M5 4c1-4 7-4 7 0v4" fill="none" stroke="#999" stroke-width="1.600"/></svg></span>
</div>
</div>
<div class="props">
<label>Unit</label><div class="button sel">Millimeters<i class="tri"></i></div>
<label>Opacity</label><div class="opac"><div class="slider"><i></i></div><span class="field spin"><span>100,0 %</span><i class="ud half"></i></span></div>
<label>Color</label><div class="color"><span class="button"><i></i></span><span class="button arr"><i class="tri"></i></span></div>
</div>
<div class="library">
<div class="search"><span class="field"><svg width="14" height="14" viewBox="0 0 14 14"><circle cx="5.700" cy="5.700" r="4.500" fill="none" stroke="#888" stroke-width="1.200"/><path d="M9 9l4 4" stroke="#888" stroke-width="1.500"/></svg><span>Topology</span><svg class="clr" width="13" height="11" viewBox="0 0 13 11"><path d="M4 0h9v11H4L0 5.500z" fill="#888"/><path d="M5.500 3l5 5m0-5l-5 5" stroke="#fff" stroke-width="1.400"/></svg><i class="box"></i></span><svg class="sm" viewBox="0 0 24 24"><use href="#i-style"/></svg></div>
<div class="grid">
<figure><i class="c1"></i><figcaption>topo building</figcaption></figure>
<figure><i class="c2"></i><figcaption>topo forest</figcaption></figure>
<figure><svg class="c3" width="62" height="53" viewBox="0 0 62 53"><path d="M0 0h62v53H0z" fill="#a2ccb9"/><path d="M26 .5h12M25 2.500h7M3 11.500h12M8 14.500h12M6 16.500h8M35 16.500h12M40 18.500h12M39 21h7M0 32.500h6M54 30.500h8M59 32.500h3M57 35h5M21 35h12M26 37.500h12M25 39.500h7M3 49.500h12M8 52h12" stroke="#6f9bd0"/></svg><figcaption>topo swamp</figcaption></figure>
<figure><i class="c4"></i><figcaption>topo urban</figcaption></figure>
<figure><i class="c5"></i><figcaption>topo water</figcaption></figure>
</div>
<div class="lfoot"><span class="button on"><svg width="14" height="14" viewBox="0 0 14 14"><path d="M.5.5h13v13H.5z" fill="#cfe0f2" stroke="#6d9acb"/><path d="M2 3h10M2 7h10M2 11h10" stroke="#3c6ea8" stroke-width="2" stroke-dasharray="2 2"/></svg></span><svg class="lst" width="14" height="14" viewBox="0 0 14 14"><path d="M.5.5h13v13H.5z" fill="#eaf1f9" stroke="#9dbbe0"/><path d="M0 0h14v4H0z" fill="#7fb0e0"/><path d="M2 6h3M6 6h6M2 8.500h3M6 8.500h6M2 11h3M6 11h6" stroke="#8eaed2"/></svg><span class="button save">Save Symbol...</span><span class="button adv">Advanced<i class="tri tiny"></i></span></div>
</div>
<div class="rendering"><i></i><b>Layer Rendering</b></div>
<div class="final"><span class="button sq"><svg viewBox="0 0 24 24"><use href="#undo" fill="#e8792d"/></svg></span><span class="button sq"><svg viewBox="0 0 24 24"><use href="#undo" fill="#7cb184" transform="matrix(-1 0 0 1 24 0)"/></svg></span><svg class="ck"><use href="#tick"/></svg><span class="live">Live update</span><span class="button apply">Apply</span></div>
</div>
</div>
</section>
</main>

<footer>
<span class="field locate"><svg width="12" height="12" viewBox="0 0 14 14"><circle cx="5.700" cy="5.700" r="4.500" fill="none" stroke="#777" stroke-width="1.300"/><path d="M9 9l4 4" stroke="#777" stroke-width="1.600"/></svg>Type to locate (⌘K)</span>
<span class="st l1">Coordinate</span><span class="field coord">108.58,-27.25</span>
<svg class="mouse" width="15" height="17" viewBox="0 0 15 17"><path d="M2 5l3-3 6 9-2 4-4 0zM5 8l4-4 4-3M7 10l6-5M9 13l5-1" fill="none" stroke="#333" stroke-width="1.300"/></svg>
<span class="st l2">Scale</span><span class="field combo scale">1:12477424<i class="box"></i></span>
<svg class="lock" width="13" height="15" viewBox="0 0 13 15"><path d="M1 7h11v7H1z" fill="#555"/><path d="M3 7V4c0-4 7-4 7 0v3" fill="none" stroke="#888" stroke-width="1.600"/></svg>
<span class="st l3">Magnifier</span><span class="field spin magn"><span>100%</span><i class="ud"></i></span>
<span class="st l4">Rotation</span><span class="field spin rota"><span>0,0 °</span><i class="ud"></i></span>
<svg class="ck"><use href="#tick"/></svg><span class="st l5">Render</span>
<svg class="crs" width="14" height="14" viewBox="0 0 14 14"><circle cx="7" cy="7" r="6.500" fill="#999" stroke="#666"/><path d="M1 4.500h12M1 9.500h12M7 1v12M4 1c-2 4-2 8 0 12M10 1c2 4 2 8 0 12" fill="none" stroke="#ddd" stroke-width=".8"/></svg>
<span class="st l6">EPSG:4326</span>
<svg class="msg" width="17" height="15" viewBox="0 0 17 15"><path d="M8 0c12 0 11 12 4 12l2 3-6-3C-3 12-3 0 8 0z" fill="#555"/><path d="M4 6h2M7.500 6h2M11 6h2" stroke="#fff" stroke-width="1.800"/></svg>
</footer>
</body>
</html>
```
FILE: styles.css
```css
* { box-sizing: border-box; }
body {
  margin: 0; width: 1919px; height: 989px; overflow: hidden;
  display: flex; flex-direction: column;
  background: #ebebeb; color: #1c1c1c;
  font-family: Inter, "Liberation Sans", sans-serif; font-size: 13px; letter-spacing: -0.15px;
}
.defs { display: block; height: 0; flex: none; position: absolute; }
svg { flex: none; overflow: visible; }
svg text { letter-spacing: 0; }
.tg { font: bold 8px "Noto Sans", sans-serif; fill: #555; }
.tgb { font: bold 8.500px "Noto Sans", sans-serif; fill: #222; }
.tgr { font: bold 8.500px "Noto Sans", sans-serif; fill: #c00; }
.sty { font: 14px "DejaVu Serif", serif; fill: #444; }
.ital { font: italic bold 14px "Liberation Serif", serif; fill: #fff; }
.serifT { font: bold 15px "Liberation Serif", serif; fill: #445; }
.qm { font: 16px "Liberation Serif", serif; fill: #fff; }
.xy { font: bold 9.500px "Noto Sans", sans-serif; fill: #111; }
.n123 { font: bold 10.500px "Noto Sans", sans-serif; fill: #111; }
.four { font: bold 18px Lato, sans-serif; fill: #fff; }
.ref { font: bold 8.500px "Noto Sans", sans-serif; fill: #fff; }
.pca { font: bold 8px "Noto Sans", sans-serif; fill: #222; }
.oeo { font: 8.500px "Noto Sans", sans-serif; fill: #245; }
.edc { font: bold 10.500px "Noto Sans", sans-serif; fill: #184f78; }
.sld { font: 9px "Noto Sans", sans-serif; fill: #111; }
.eps { font: bold 22px "Liberation Serif", serif; fill: #6a3470; }
.abc { font: bold 11.500px "Noto Sans", sans-serif; fill: #333; }

.title {
  height: 22px; flex: none; display: flex; align-items: center; justify-content: center;
  background: linear-gradient(#e4e4e4, #cacaca); border-bottom: 1px solid #9d9d9d; position: relative;
}
.title b { font-weight: 400; font-size: 13.300px; color: #444; letter-spacing: -0.150px; padding: 1px 0 0; }
.lights { position: absolute; left: 8px; top: 5px; display: flex; gap: 8px; }
.lights i { width: 12px; height: 12px; border-radius: 50%; background: #828286; border: 1px solid #717175; }

.bar {
  height: 39px; flex: none; display: flex; align-items: center;
  background: linear-gradient(#f5f5f5, #eaeaea); border-bottom: 1px solid #b3b3b3;
}
.bar.last { height: 38px; }
.t { width: 24px; height: 24px; margin: 0 4.500px; }
.off { opacity: .34; filter: grayscale(.7); }
.t.on { width: 32px; height: 31px; margin: 0 .5px; padding: 3px 3px 3px 4px; background: #d8d8d8; border: 1px solid #a2a2a2; border-radius: 2px; }
.grip {
  width: 16.200px; height: 18px; flex: none; align-self: center;
  background: radial-gradient(circle, #aaa 0.7px, transparent 0.9px) 8px 0 / 2px 3px;
  background-clip: content-box; padding: 0 4.200px 0 8px;
}
.grip.first { width: 12.500px; padding: 0 4px 0 4.500px; }
.sep { width: 6.700px; height: 22px; flex: none; background: linear-gradient(#cdcdcd, #cdcdcd) 3px 0 / 1px 100% no-repeat; }
.tri { width: 0; height: 0; flex: none; border: 4px solid transparent; border-top: 5px solid #555; border-bottom: 0; }
.tri.right { border: 4px solid transparent; border-left: 5px solid #666; border-right: 0; }
.tri.tiny { border-width: 4px 3px 0; }
.dd { width: 12px; height: 5px; flex: none; background: #555; clip-path: polygon(1px 0, 9px 0, 5px 5px); }
.fill { flex: 1; }
.more { width: 17px; font-size: 17px; color: #444; text-align: center; padding-bottom: 3px; }

.field { display: flex; align-items: center; flex: none; background: #fff; border: 1px solid #b2b2b2; border-radius: 2px; overflow: hidden; }
.field.combo { justify-content: space-between; }
.spin { justify-content: space-between; }
.ud { width: 12px; height: 100%; border-left: 1px solid #c2c2c2; background: #f7f7f7; display: flex; flex-direction: column; align-items: center; justify-content: center; gap: 4px; }
.ud::before, .ud::after { content: ""; border: 3.500px solid transparent; border-bottom: 4px solid #555; border-top: 0; }
.ud::after { border-bottom: 0; border-top: 4px solid #555; }
.ud.half::before { border-bottom-color: #aaa; }
.box { width: 20px; height: 100%; border-left: 1px solid #c2c2c2; background: #f9f9f9; display: flex; align-items: center; justify-content: center; }
.box::after { content: ""; border: 4px solid transparent; border-top: 5px solid #555; border-bottom: 0; }
.button { display: flex; align-items: center; justify-content: center; flex: none; background: linear-gradient(#fff, #efefef); border: 1px solid #a9a9a9; border-radius: 2.500px; }
.snap { width: 97px; height: 23px; margin-left: 1px; padding-left: 4px; }
.unit { width: 98px; height: 23px; margin: 0 2px; padding-left: 5px; }
.unit .box { width: 15px; border: 0; background: none; }
.country { width: 93px; height: 24px; gap: 11px; letter-spacing: -.3px; }
.find { width: 125px; height: 24px; margin: 0 0 0 2px; padding-left: 3px; color: #8a8a8a; border-radius: 3px; letter-spacing: -.3px; }

main { flex: 1; min-height: 0; display: flex; }
.side { width: 52px; background: linear-gradient(90deg, #f6f6f6, #eaeaea); border-right: 1px solid #b0b0b0; padding-top: 5px; }
.hgrip { display: block; width: 17px; height: 6px; margin: 0 0 2px 18px; background: radial-gradient(circle, #aaa .7px, transparent .9px) 0 0 / 3px 2px; }
.side div { height: 32px; display: flex; align-items: center; padding-left: 3.500px; }
.side .tri { margin-left: 1px; }

h2 { margin: 0; font-weight: 400; font-size: 12px; color: #262626; display: flex; align-items: center; justify-content: space-between; letter-spacing: -0.050px; }
.winbtns { display: flex; gap: 3px; }
.winbtns svg { width: 11px; height: 11px; }
.layers { width: 462px; display: flex; flex-direction: column; padding-bottom: 1px; }
.layers h2 { height: 22px; padding: 0 2px 1px 4px; }
.ltools { height: 27px; margin-bottom: 2px; display: flex; align-items: center; padding-left: 3px; }
.s { width: 17px; height: 17px; margin: 0 4px; }
.s.on { width: 24px; height: 23px; margin: 0 .5px; padding: 2px; border: 1px solid #a2a2a2; background: #dadada; border-radius: 2px; }
.ltools .dd { margin: 0 0 0 1px; }
.tree { flex: 1; background: #fff; border: 1px solid #b4b4b4; }
.row { height: 18px; display: flex; align-items: center; color: #222; }
.row.in { padding-left: 20px; }
.tw { width: 23px; flex: none; display: flex; justify-content: center; padding-right: 3px; }
.ck { width: 14px; height: 14px; }
.sw { width: 16px; height: 16px; flex: none; margin: 0 3px 0 6px; border: 1px solid #7e3335; }
.red { background: #b7484b; }
.pale { background: #f5f5f5; border-color: #ccc; }
.fade { background: #bf746c; border-color: #a2625c; }
.li { width: 16px; height: 16px; margin: 0 3px 0 6px; }
.row span, .row b { padding-left: 3px; }
.row b { font-weight: 700; font-size: 13px; letter-spacing: -.05px; }
.row .cur { flex: 1; background: #e8f4e3; border: 1px solid #b5d3ae; height: 18px; line-height: 16px; padding-left: 2px; color: #263b22; letter-spacing: .05px; }

.map { width: 891px; margin: 1px 0 0 6px; height: 783px; background: #fff; border: 1px solid #b4b4b4; }
.aus { display: block; width: 889px; height: 781px; overflow: hidden; }
.land path, .land use { fill: #b7484b; stroke: #444; stroke-width: 2.600; stroke-linejoin: round; }
.bord path { fill: none; stroke: #352a2b; stroke-width: 3; }
.specks path { fill: none; stroke: #3b3536; stroke-width: 3; }
.faint path { fill: none; stroke: #aaa; stroke-width: 2.500; stroke-dasharray: 3 6; }
.cay { fill: none; stroke: #b5b31c; stroke-width: 2; stroke-dasharray: 8 6; }
.shadow { fill: #000; }
.clinic circle { fill: #fff; stroke: #e01b24; stroke-width: 3.500; }
.clinic path { fill: none; stroke: #e01b24; stroke-width: 6; }
.bay { fill: none; stroke: #403436; stroke-width: 3; }

.styling { width: 499px; margin-left: 9px; display: flex; flex-direction: column; }
.styling h2 { height: 22px; padding: 0 0 1px 1px; margin-bottom: 1px; }
.sel { justify-content: flex-start; height: 24px; padding: 0 7px 0 5px; }
.sel .tri { margin-left: auto; }
.sel svg { margin-right: 3px; }
.layer { width: 497px; letter-spacing: -.1px; }
.cols { flex: 1; min-height: 0; display: flex; gap: 3px; }
.tabs { width: 38px; height: 735px; background: #5b5b5b; }
.tabs span { display: flex; height: 32px; padding-left: 4px; align-items: center; }
.tabs .active { height: 38px; background: #ebebeb; padding: 6px 0 0 6px; }
.tabs .active svg { opacity: .75; }
.tabs svg { width: 22px; height: 22px; }
.page { width: 456px; padding-top: 6px; display: flex; flex-direction: column; }
.page > .sel { padding-left: 6px; }
.symbol { height: 143px; display: flex; padding-top: 6px; border-bottom: 1px solid #b9b9b9; box-shadow: 0 1px #fff; }
.preview { width: 118px; padding: 35px 0 0 26px; }
.preview i { display: block; width: 61px; height: 61px; background: #b7484b; border: 1px solid #444; }
.stree { width: 270px; height: 112px; margin-top: 9px; background: #fff; border: 1px solid #b0b0b0; }
.srow { height: 18px; display: flex; align-items: center; gap: 3px; }
.head { background: #dbdbdb; padding-left: 6px; }
.sub { padding-left: 37px; }
.ops { width: 62px; height: 80px; margin-left: 6px; display: grid; grid-template-columns: 28px 28px; grid-auto-rows: 24px; gap: 4px 6px; }
.ops svg { width: 16px; height: 16px; }
.dim { border-color: #c3c3c3; }
.dim svg { opacity: .4; }
.props { display: grid; grid-template-columns: 47px 400px; grid-template-rows: 24px 24px 28px; align-items: center; padding-top: 8px; letter-spacing: -.25px; }
.opac { display: flex; align-items: center; gap: 4px; }
.slider { width: 296px; height: 5px; border: 1px solid #2c6cc0; border-radius: 2px; background: #4d99ef; position: relative; }
.slider i { position: absolute; right: 0; top: -5px; width: 13px; height: 13px; background: #fff; border: 1px solid #aaa; border-radius: 3px; }
.opac .field { width: 100px; height: 21px; padding-left: 4px; }
.opac .ud { width: 14px; }
.color { display: flex; gap: 1px; }
.color .button { width: 387px; height: 28px; }
.color .button i { width: 378px; height: 16px; background: #b7484b; border-radius: 3px; }
.color .arr { width: 12px; }
.color .arr i { width: 0; height: 0; background: none; border-radius: 0; }
.library { width: 447px; margin-top: 67px; border-top: 1px solid #b9b9b9; box-shadow: inset 0 1px #fff; }
.search { display: flex; align-items: center; margin-top: 6px; gap: 10px; }
.search .field { width: 417px; height: 24px; padding-left: 10px; gap: 6px; }
.clr { margin-left: auto; margin-right: 3px; }
.sm { width: 16px; height: 16px; }
.grid { height: 277px; margin-top: 4px; background: #fff; border: 1px solid #b4b4b4; display: grid; grid-template-columns: repeat(4, 101px); grid-auto-rows: 100px; padding: 20px 0 0 2px; }
figure { margin: 0; display: flex; flex-direction: column; align-items: center; font-size: 9.500px; letter-spacing: 0; }
figure i { width: 64px; height: 55px; border: 1px solid #fff; }
.c1 { background: #2e2e2e; border-color: #777; }
.c2 { background: #94d180; }
.c3 { margin: 1px 0; }
.c4 { background: #ffa5b6; }
.c5 { background: #a5bddc; border-color: #8db3de; }
figcaption { margin-top: 14px; }
.lfoot { display: flex; align-items: center; margin-top: 6px; height: 24px; }
.lfoot .button { height: 24px; letter-spacing: -.1px; }
.lfoot .on { width: 24px; height: 23px; background: #dadada; }
.lst { margin: 0 0 0 5px; opacity: .8; }
.save { width: 96px; margin-left: auto; }
.adv { width: 81px; margin-left: 6px; gap: 6px; }
.rendering { display: flex; align-items: center; height: 20px; margin: 20px 0 0 5px; gap: 10px; font-size: 13px; color: #000; letter-spacing: 0; }
.rendering i { border: 5px solid transparent; border-left: 7px solid #333; border-right: 0; }
.final { display: flex; align-items: center; margin-top: 4px; height: 24px; }
.sq { width: 24px; height: 23px; margin-right: 6px; }
.sq svg { width: 13px; height: 13px; }
.final .ck { margin-left: auto; }
.live { padding: 0 12px 0 5px; }
.apply { width: 80px; height: 24px; }

footer { height: 27px; flex: none; display: flex; align-items: center; font-size: 11px; letter-spacing: -.1px; }
.locate { width: 212px; height: 22px; margin-left: 4px; padding-left: 7px; gap: 8px; color: #777; font-size: 12px; border-radius: 3px; letter-spacing: .1px; }
.st { flex: none; }
.l1 { width: 62px; margin-left: 869px; }
.coord, .scale, .magn, .rota { height: 23px; padding-left: 5px; }
.coord { width: 86px; letter-spacing: .05px; }
.mouse { margin-left: 4px; }
.l2 { width: 31px; margin-left: 14px; }
.scale { width: 94px; padding-left: 3px; }
.lock { margin-left: 12px; }
.l3 { width: 52px; margin-left: 8px; }
.magn { width: 88px; }
.l4 { width: 53px; margin-left: 10px; }
.rota { width: 91px; }
.magn .ud, .rota .ud { width: 14px; }
footer .ck { margin-left: 6px; }
.l5 { width: 37px; margin-left: 6px; }
.crs { margin-left: 16px; }
.l6 { width: 60px; margin-left: 4px; }
.msg { margin-left: 22px; }
```
